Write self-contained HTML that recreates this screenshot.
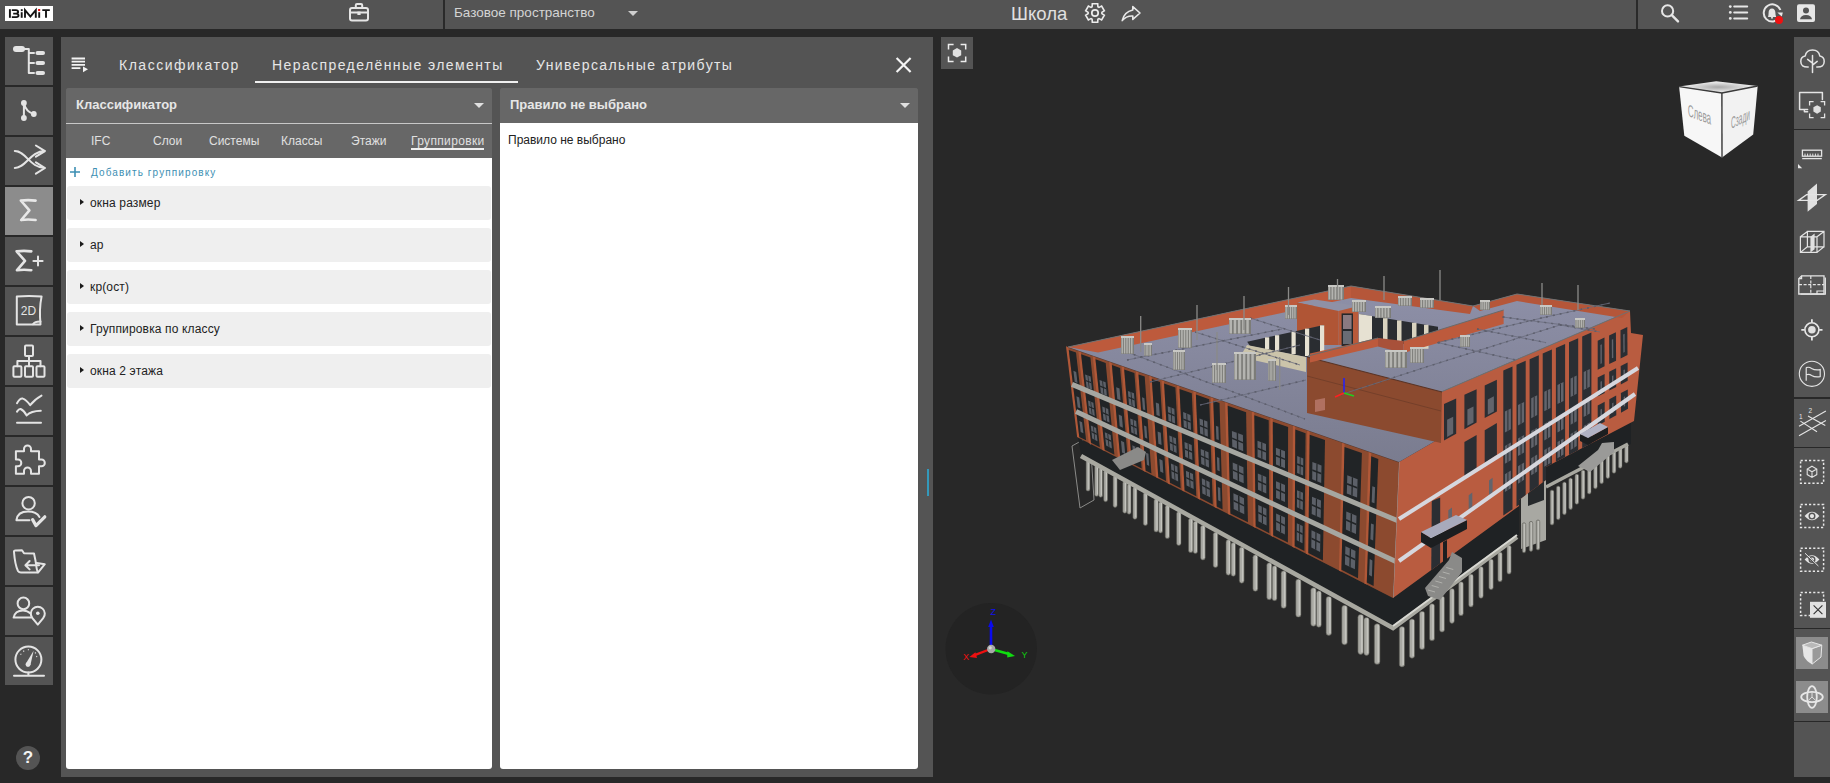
<!DOCTYPE html>
<html><head><meta charset="utf-8">
<style>
*{margin:0;padding:0;box-sizing:border-box}
html,body{width:1830px;height:783px;overflow:hidden;background:#282828;font-family:"Liberation Sans",sans-serif}
.abs{position:absolute}
#top{position:absolute;left:0;top:0;width:1830px;height:29px;background:#545454}
.sep{position:absolute;top:0;width:2px;height:29px;background:#2a2a2a}
.lb{position:absolute;left:5px;width:48px;height:48px;background:#545454}
.lb svg{position:absolute;left:0;top:0}
#panel{position:absolute;left:61px;top:37px;width:872px;height:740px;background:#545454}
.tab{position:absolute;top:20px;font-size:14px;letter-spacing:1.25px;color:#e6e6e6;white-space:nowrap}
.card{position:absolute;background:#fff;border-radius:3px;overflow:hidden}
.chead{position:absolute;left:0;top:0;width:100%;height:35px;background:#676767}
.ctitle{position:absolute;left:10px;top:9px;font-size:13px;font-weight:bold;color:#e6e6e6;white-space:nowrap}
.subtab{position:absolute;top:10px;font-size:12px;color:#e0e0e0;white-space:nowrap}
.item{position:absolute;left:1px;width:424px;height:34px;background:#efefef;border-radius:3px}
.item .tri{position:absolute;left:13px;top:12.8px;width:0;height:0;border-top:3.3px solid transparent;border-bottom:3.3px solid transparent;border-left:4.6px solid #1a1a1a}
.item .txt{position:absolute;left:23px;top:10px;font-size:12px;letter-spacing:0.15px;color:#222;white-space:nowrap}
#rbar{position:absolute;left:1794px;top:37px;width:36px;height:740px;background:#545454}
.rsep{position:absolute;left:0;width:36px;height:1.5px;background:#282828}
</style></head><body>

<!-- TOP BAR -->
<div id="top">
  <div class="abs" style="left:5px;top:6px;width:48px;height:15px;background:#fff"></div>
  <svg class="abs" style="left:0;top:0" width="60" height="29" viewBox="0 0 60 29"><g fill="none" stroke="#151515" stroke-width="1.9">
<path d="M9.9,9.2 V17.8"/><path d="M11.8,10.1 H15.9 Q18.1,10.1 18.1,11.9 Q18.1,13.6 15.9,13.6 H13.2 M15.9,13.6 Q18.5,13.6 18.5,15.6 Q18.5,17.1 16.2,17.1 H11.8"/>
<path d="M21.7,12.2 V17.8"/><path d="M25,17.8 V10.2 L30.4,16.6 L35.8,10.2 V17.8"/><path d="M39.2,12.2 V17.8"/><path d="M42.3,10.1 H49.8 M46,10.1 V17.8"/></g>
<rect x="20.8" y="9.2" width="1.9" height="1.9" fill="#151515"/><rect x="38.1" y="9" width="2.1" height="2.1" fill="#e81010"/></svg>
  <div class="sep" style="left:443px"></div>
  <div class="abs" style="left:454px;top:5px;font-size:13.5px;color:#d4d4d4;white-space:nowrap">Базовое пространство</div>
  <div class="abs" style="left:628px;top:11px;width:0;height:0;border-left:5px solid transparent;border-right:5px solid transparent;border-top:5px solid #cfcfcf"></div>
  <div class="abs" style="left:1011px;top:3px;font-size:18.5px;color:#e0e0e0;white-space:nowrap">Школа</div>
  <div class="sep" style="left:1636px"></div>
<svg class="abs" style="left:0;top:0" width="1830" height="29" viewBox="0 0 1830 29">
<rect x="350" y="8" width="18" height="12.6" rx="2" fill="none" stroke="#e6e6e6" stroke-width="2" stroke-linecap="round" stroke-linejoin="round"/>
<path d="M355.8,8 V5.2 Q355.8,4 357,4 H361 Q362.2,4 362.2,5.2 V8" fill="none" stroke="#e6e6e6" stroke-width="2" stroke-linecap="round" stroke-linejoin="round"/>
<path d="M350,12.6 H368" fill="none" stroke="#e6e6e6" stroke-width="2" stroke-linecap="round" stroke-linejoin="round"/>
<rect x="357.4" y="11.6" width="3.2" height="3.4" fill="#e6e6e6"/>
<path d="M1092.10,6.74 L1092.30,3.79 L1097.70,3.79 L1097.90,6.74 A6.9,6.9 0 0 1 1098.97,7.36 L1101.63,6.06 L1104.33,10.73 L1101.87,12.38 A6.9,6.9 0 0 1 1101.87,13.62 L1104.33,15.27 L1101.63,19.94 L1098.97,18.64 A6.9,6.9 0 0 1 1097.90,19.26 L1097.70,22.21 L1092.30,22.21 L1092.10,19.26 A6.9,6.9 0 0 1 1091.03,18.64 L1088.37,19.94 L1085.67,15.27 L1088.13,13.62 A6.9,6.9 0 0 1 1088.13,12.38 L1085.67,10.73 L1088.37,6.06 L1091.03,7.36 A6.9,6.9 0 0 1 1092.10,6.74 Z" fill="none" stroke="#ececec" stroke-width="1.6" stroke-linejoin="miter"/>
<circle cx="1095" cy="13" r="3.2" fill="none" stroke="#ececec" stroke-width="1.7"/>
<path d="M1132.8,6.6 L1140,13 L1132.8,19.4 V16 Q1126.4,15.6 1122.2,20.6 Q1124.2,11.8 1132.8,10 Z" fill="#545454" stroke="#e8e8e8" stroke-width="1.6" stroke-linejoin="round"/>
<circle cx="1667.6" cy="10.9" r="5.6" fill="none" stroke="#e6e6e6" stroke-width="2"/>
<path d="M1671.8,15.2 L1678,21.4" stroke="#e6e6e6" stroke-width="2.4" stroke-linecap="round"/>
<circle cx="1730.3" cy="6.6" r="1.4" fill="#e6e6e6"/><circle cx="1730.3" cy="12.4" r="1.4" fill="#e6e6e6"/><circle cx="1730.3" cy="18.4" r="1.4" fill="#e6e6e6"/>
<path d="M1734.2,6.6 H1747.2 M1734.2,12.4 H1747.2 M1734.2,18.4 H1747.2" stroke="#e6e6e6" stroke-width="2" stroke-linecap="round"/>
<path d="M1779.6,17.6 A8.6,8.6 0 1 1 1780.4,10" fill="none" stroke="#e6e6e6" stroke-width="2"/>
<path d="M1777.4,12.6 L1781.8,16.6 L1782.8,12.4 Z" fill="#e6e6e6"/>
<path d="M1768,17 Q1768.6,15.6 1768.6,12.8 Q1768.6,8.6 1772,8.4 Q1775.2,8.6 1775.4,12.8 Q1775.4,15.6 1776.2,17 Z" fill="#e6e6e6"/>
<circle cx="1772" cy="17.8" r="1" fill="#e6e6e6"/>
<circle cx="1779" cy="19.9" r="4" fill="#ee1111"/>
<rect x="1797" y="4.2" width="18" height="17.8" rx="2" fill="#e6e6e6"/>
<circle cx="1806" cy="10.4" r="3" fill="#545454"/>
<path d="M1800,19.2 Q1800.6,15.2 1806,15 Q1811.4,15.2 1812,19.2 Z" fill="#545454"/>
</svg>
</div>

<!-- LEFT SIDEBAR -->
<div class="lb" style="top:37px"><svg width="48" height="48" viewBox="0 0 48 48"><rect x="8" y="9" width="12" height="6" rx="3" fill="#e4e4e4"/><path d="M19,12 H23.8 V36 M23.8,16 H29 M23.8,26 H29 M23.8,36 H29" fill="none" stroke="#e4e4e4" stroke-width="2" stroke-linecap="round" stroke-linejoin="round"/><rect x="30.5" y="14" width="9.5" height="4" rx="2" fill="#e4e4e4"/><rect x="30.5" y="24" width="9.5" height="4" rx="2" fill="#e4e4e4"/><rect x="30.5" y="34" width="9.5" height="4" rx="2" fill="#e4e4e4"/></svg></div>
<div class="lb" style="top:87px"><svg width="48" height="48" viewBox="0 0 48 48"><path d="M18.9,16 V31 M18.9,16 Q21,25 28.8,27" fill="none" stroke="#e4e4e4" stroke-width="2" stroke-linecap="round" stroke-linejoin="round"/><circle cx="18.9" cy="16" r="2.9" fill="#e4e4e4"/><circle cx="28.8" cy="27" r="2.9" fill="#e4e4e4"/><circle cx="18.9" cy="31" r="2.9" fill="#e4e4e4"/></svg></div>
<div class="lb" style="top:137px"><svg width="48" height="48" viewBox="0 0 48 48"><path d="M9.8,14.1 C21,14.1 25,31 40,31 M9.8,31 C21,31 25,14.1 40,14.1 M30.9,8.5 L40,14.1 L30.9,19.7 M30.9,25.3 L40,31 L30.9,36.7" fill="none" stroke="#e4e4e4" stroke-width="2" stroke-linecap="round" stroke-linejoin="round"/></svg></div>
<div class="lb" style="top:187px;background:#8c8c8c"><svg width="48" height="48" viewBox="0 0 48 48"><path d="M15.8,13.6 Q23,12.6 30.6,13.6 M16.2,14 L24.4,23.3 L16.2,33 M16.2,33 Q23,32 30.6,33" fill="none" stroke="#e8e8e8" stroke-width="2.6" stroke-linecap="round" stroke-linejoin="round"/></svg></div>
<div class="lb" style="top:237px"><svg width="48" height="48" viewBox="0 0 48 48"><path d="M11.6,14.4 Q19,13.4 26.3,14.4 M12,14.8 L20,23.8 L12,33.2 M12,33.2 Q19,32.4 26.3,33.2" fill="none" stroke="#e4e4e4" stroke-width="2.6" stroke-linecap="round" stroke-linejoin="round"/><path d="M28.4,24 H37.6 M33,19.4 V28.6" fill="none" stroke="#e4e4e4" stroke-width="2" stroke-linecap="round" stroke-linejoin="round"/></svg></div>
<div class="lb" style="top:287px"><svg width="48" height="48" viewBox="0 0 48 48"><path d="M11.8,9.4 Q24,8.6 36.6,9.4 Q34,22 35.5,37.4 L11.8,37.4 Z" fill="none" stroke="#e4e4e4" stroke-width="2" stroke-linecap="round" stroke-linejoin="round"/><path d="M28,37.3 Q30,34.4 35.5,34.6" fill="none" stroke="#e4e4e4" stroke-width="2" stroke-linecap="round" stroke-linejoin="round"/><text x="23.5" y="28.4" font-family="Liberation Sans" font-size="12" fill="#e4e4e4" text-anchor="middle">2D</text></svg></div>
<div class="lb" style="top:337px"><svg width="48" height="48" viewBox="0 0 48 48"><rect x="20" y="8.5" width="8" height="10.5" rx="1" fill="none" stroke="#e4e4e4" stroke-width="2" stroke-linecap="round" stroke-linejoin="round" stroke-width="1.8"/><rect x="8.4" y="29.2" width="8" height="10.5" rx="1" fill="none" stroke="#e4e4e4" stroke-width="2" stroke-linecap="round" stroke-linejoin="round" stroke-width="1.8"/><rect x="20" y="29.2" width="8" height="10.5" rx="1" fill="none" stroke="#e4e4e4" stroke-width="2" stroke-linecap="round" stroke-linejoin="round" stroke-width="1.8"/><rect x="31.5" y="29.2" width="8" height="10.5" rx="1" fill="none" stroke="#e4e4e4" stroke-width="2" stroke-linecap="round" stroke-linejoin="round" stroke-width="1.8"/><path d="M24,19 V29.2 M12.4,29.2 V24 H35.5 V29.2" fill="none" stroke="#e4e4e4" stroke-width="2" stroke-linecap="round" stroke-linejoin="round" stroke-width="1.6"/></svg></div>
<div class="lb" style="top:387px"><svg width="48" height="48" viewBox="0 0 48 48"><path d="M12,16.2 Q15,11 17.8,11.6 Q21,12.5 25.2,18.2 Q30,12 36.5,8.6" fill="none" stroke="#e4e4e4" stroke-width="2" stroke-linecap="round" stroke-linejoin="round" stroke-width="2.2"/><path d="M12,24.6 Q14,21.6 15.6,22 Q19,23.5 21.7,28.4 Q26,24 35.8,23.8" fill="none" stroke="#e4e4e4" stroke-width="2" stroke-linecap="round" stroke-linejoin="round" stroke-width="2.2"/><path d="M12,35.8 H36" fill="none" stroke="#e4e4e4" stroke-width="2" stroke-linecap="round" stroke-linejoin="round" stroke-width="2.2"/></svg></div>
<div class="lb" style="top:437px"><svg width="48" height="48" viewBox="0 0 48 48"><path d="M10.9,14.2 H19 V12 A3.5,3.5 0 0 1 26,12 V14.2 H34 V22.6 H36.5 A3.3,3.3 0 0 1 36.5,29.2 H34 V36.7 H26 V34 A3.5,3.5 0 0 0 19,34 V36.7 H10.9 V29.2 H13 A3.3,3.3 0 0 0 13,22.6 H10.9 Z" fill="none" stroke="#e4e4e4" stroke-width="2" stroke-linecap="round" stroke-linejoin="round" stroke-width="2"/></svg></div>
<div class="lb" style="top:487px"><svg width="48" height="48" viewBox="0 0 48 48"><circle cx="23.6" cy="16.2" r="6.2" fill="none" stroke="#e4e4e4" stroke-width="2" stroke-linecap="round" stroke-linejoin="round"/><path d="M11.4,33.2 Q12.5,24.6 23,24.6 Q31.5,24.6 34.5,30 M11.4,33.2 H24.5" fill="none" stroke="#e4e4e4" stroke-width="2" stroke-linecap="round" stroke-linejoin="round"/><path d="M27.6,32.6 L31,38.6 L39.8,29.8" fill="none" stroke="#e4e4e4" stroke-width="3.2" stroke-linecap="round" stroke-linejoin="round"/></svg></div>
<div class="lb" style="top:537px"><svg width="48" height="48" viewBox="0 0 48 48"><path d="M9,15 Q8.6,13.6 10.5,13.4 L17,13.2 L19,16.2 L29,16.4 Q30.6,23 31.6,31 M9,15 Q10,28 13,34 Q14,35.6 16,35.6 L33,35.6 L39.8,27.2 L31.8,26 M33,35.6 Q31.8,33 31.6,31" fill="none" stroke="#e4e4e4" stroke-width="2" stroke-linecap="round" stroke-linejoin="round" stroke-width="1.8"/><path d="M34,28.2 H20.6 M24.6,24 L20.4,28.2 L24.6,32.4" fill="none" stroke="#e4e4e4" stroke-width="2" stroke-linecap="round" stroke-linejoin="round" stroke-width="1.8"/></svg></div>
<div class="lb" style="top:587px"><svg width="48" height="48" viewBox="0 0 48 48"><circle cx="18.4" cy="16.4" r="5.8" fill="none" stroke="#e4e4e4" stroke-width="2" stroke-linecap="round" stroke-linejoin="round"/><path d="M8.6,30.6 Q10,23.4 18,23.4 Q22.6,23.4 25.6,26.6 M8.6,30.6 H26" fill="none" stroke="#e4e4e4" stroke-width="2" stroke-linecap="round" stroke-linejoin="round"/><path d="M32.8,37.6 L27.4,31.2 A7,7 0 1 1 38.2,31.2 Z" fill="none" stroke="#e4e4e4" stroke-width="2" stroke-linecap="round" stroke-linejoin="round" stroke-width="1.8"/><circle cx="32.8" cy="26.2" r="1.8" fill="#e4e4e4"/></svg></div>
<div class="lb" style="top:637px"><svg width="48" height="48" viewBox="0 0 48 48"><circle cx="23.4" cy="22.6" r="13" fill="none" stroke="#e4e4e4" stroke-width="2" stroke-linecap="round" stroke-linejoin="round" stroke-width="2.2"/><path d="M23.4,35.6 V38.6 M9,38.7 H39" fill="none" stroke="#e4e4e4" stroke-width="2" stroke-linecap="round" stroke-linejoin="round" stroke-width="2.2"/><path d="M20.6,27 L28.6,13.8 L25.4,28.2 Z" fill="#e4e4e4"/><circle cx="23" cy="27.6" r="2.4" fill="#e4e4e4"/><path d="M15.5,17 L16.3,17.6 M18.4,13.7 L19,14.6 M23.4,12.2 V13.3 M30.8,15.5 L30,16.3 M32.2,19.4 L31.2,19.8" stroke="#e4e4e4" stroke-width="1.2"/></svg></div>
<div class="abs" style="left:16px;top:746px;width:24px;height:24px;border-radius:50%;background:#545454;color:#f4f4f4;font-weight:bold;font-size:17px;text-align:center;line-height:23px">?</div>

<!-- PANEL -->
<div id="panel">
<svg class="abs" style="left:0;top:0" width="872" height="60" viewBox="61 37 872 60">
<path d="M71.6,58.5 H85 M71.6,61.7 H85 M71.6,64.9 H85 M71.6,68.1 H80.4" stroke="#f2f2f2" stroke-width="1.8"/>
<path d="M83,66.4 L88,69.3 L83,72.2 Z" fill="#f2f2f2"/>
<path d="M896.6,58 L910.6,72 M910.6,58 L896.6,72" stroke="#f4f4f4" stroke-width="2.2"/>
</svg>
  <div class="tab" style="left:58px;letter-spacing:1.52px">Классификатор</div>
  <div class="tab" style="left:211px;letter-spacing:1.41px">Нераспределённые элементы</div>
  <div class="abs" style="left:194px;top:44px;width:263px;height:2px;background:#f0f0f0"></div>
  <div class="tab" style="left:475px;letter-spacing:1.37px">Универсальные атрибуты</div>

  <div class="card" style="left:5px;top:51px;width:426px;height:681px;background:linear-gradient(#676767 0,#676767 70px,#fff 70px)">
    <div class="chead"></div>
    <div class="ctitle">Классификатор</div>
    <div class="abs" style="left:408px;top:15px;width:0;height:0;border-left:5px solid transparent;border-right:5px solid transparent;border-top:5px solid #e0e0e0"></div>
    <div class="abs" style="left:0;top:35px;width:100%;height:1px;background:#c8c8c8"></div>
    <div class="abs" style="left:0;top:36px;width:100%;height:34px;background:#676767">
      <div class="subtab" style="left:25px">IFC</div>
      <div class="subtab" style="left:87px">Слои</div>
      <div class="subtab" style="left:143px">Системы</div>
      <div class="subtab" style="left:215px">Классы</div>
      <div class="subtab" style="left:285px">Этажи</div>
      <div class="subtab" style="left:345px;letter-spacing:0.35px">Группировки</div>
      <div class="abs" style="left:345px;top:24px;width:73px;height:2px;background:#f0f0f0"></div>
    </div>
    <svg class="abs" style="left:2px;top:78px" width="14" height="14" viewBox="0 0 14 14"><path d="M2,6 H12 M7,1 V11" stroke="#3d8fb3" stroke-width="1.6"/></svg>
    <div class="abs" style="left:25px;top:79px;font-size:10px;letter-spacing:1.1px;color:#3d8fb3;white-space:nowrap">Добавить группировку</div>
    <div class="item" style="top:98px"><div class="tri"></div><div class="txt">окна размер</div></div>
    <div class="item" style="top:140px"><div class="tri"></div><div class="txt">ар</div></div>
    <div class="item" style="top:182px"><div class="tri"></div><div class="txt">кр(ост)</div></div>
    <div class="item" style="top:224px"><div class="tri"></div><div class="txt">Группировка по классу</div></div>
    <div class="item" style="top:266px"><div class="tri"></div><div class="txt">окна 2 этажа</div></div>
  </div>

  <div class="card" style="left:439px;top:51px;width:418px;height:681px;background:linear-gradient(#676767 0,#676767 35px,#fff 35px)">
    <div class="chead"></div>
    <div class="ctitle">Правило не выбрано</div>
    <div class="abs" style="left:400px;top:15px;width:0;height:0;border-left:5px solid transparent;border-right:5px solid transparent;border-top:5px solid #e0e0e0"></div>
    <div class="abs" style="left:8px;top:45px;font-size:12px;color:#222;white-space:nowrap">Правило не выбрано</div>
  </div>
  <div class="abs" style="left:866px;top:432px;width:2px;height:27px;background:#3399bb"></div>
</div>

<!-- VIEWPORT focus btn -->
<div class="abs" style="left:941px;top:37px;width:32px;height:32px;background:#545454"></div>
<svg class="abs" style="left:941px;top:37px" width="32" height="32" viewBox="941 37 32 32">
<path d="M948.5,49.5 V44.4 H953.6 M960.6,44.4 H965.7 V49.5 M965.7,56.4 V61.6 H960.6 M953.6,61.6 H948.5 V56.4" fill="none" stroke="#ececec" stroke-width="1.5"/>
<path d="M957,48 L961.2,50.4 V55.2 L957,57.6 L952.8,55.2 V50.4 Z" fill="#e2e2e2"/>
</svg>

<!-- RIGHT BAR -->
<div id="rbar">
  <div class="rsep" style="top:91.6px"></div>
  <div class="rsep" style="top:360px"></div>
  <div class="rsep" style="top:409.8px"></div>
  <div class="rsep" style="top:590.8px"></div>
  <div class="rsep" style="top:683.8px"></div>
  <div class="abs" style="left:2px;top:600px;width:32px;height:32px;background:#8c8c8c"></div>
  <div class="abs" style="left:2px;top:644px;width:32px;height:32px;background:#8c8c8c"></div>
</div>

<svg class="abs" style="left:0;top:0" width="1830" height="783" viewBox="0 0 1830 783"><rect x="1086.1" y="460.1" width="3.8" height="31.0" rx="1.9" fill="#a9a9a3" stroke="#55554f" stroke-width="0.6"/><rect x="1088.2" y="461.1" width="1.1" height="28.0" fill="#c4c4be"/><rect x="1094.7" y="465.0" width="3.9" height="31.3" rx="1.9" fill="#a9a9a3" stroke="#55554f" stroke-width="0.6"/><rect x="1096.9" y="466.0" width="1.2" height="28.3" fill="#c4c4be"/><rect x="1098.9" y="468.0" width="3.7" height="29.3" rx="1.8" fill="#a9a9a3" stroke="#55554f" stroke-width="0.6"/><rect x="1100.9" y="469.0" width="1.1" height="26.3" fill="#c4c4be"/><rect x="1103.7" y="470.2" width="3.9" height="31.6" rx="2.0" fill="#a9a9a3" stroke="#55554f" stroke-width="0.6"/><rect x="1105.9" y="471.2" width="1.2" height="28.6" fill="#c4c4be"/><rect x="1113.1" y="475.5" width="4.0" height="31.9" rx="2.0" fill="#a9a9a3" stroke="#55554f" stroke-width="0.6"/><rect x="1115.3" y="476.5" width="1.2" height="28.9" fill="#c4c4be"/><rect x="1122.8" y="481.0" width="4.0" height="32.2" rx="2.0" fill="#a9a9a3" stroke="#55554f" stroke-width="0.6"/><rect x="1125.0" y="482.0" width="1.2" height="29.2" fill="#c4c4be"/><rect x="1127.2" y="484.0" width="3.8" height="30.2" rx="1.9" fill="#a9a9a3" stroke="#55554f" stroke-width="0.6"/><rect x="1129.3" y="485.0" width="1.1" height="27.2" fill="#c4c4be"/><rect x="1132.9" y="486.7" width="4.1" height="32.6" rx="2.1" fill="#a9a9a3" stroke="#55554f" stroke-width="0.6"/><rect x="1135.1" y="487.7" width="1.2" height="29.6" fill="#c4c4be"/><rect x="1143.3" y="492.6" width="4.2" height="32.9" rx="2.1" fill="#a9a9a3" stroke="#55554f" stroke-width="0.6"/><rect x="1145.6" y="493.6" width="1.3" height="29.9" fill="#c4c4be"/><rect x="1154.0" y="498.7" width="4.3" height="33.3" rx="2.1" fill="#a9a9a3" stroke="#55554f" stroke-width="0.6"/><rect x="1156.4" y="499.7" width="1.3" height="30.3" fill="#c4c4be"/><rect x="1158.6" y="501.7" width="4.0" height="31.3" rx="2.0" fill="#a9a9a3" stroke="#55554f" stroke-width="0.6"/><rect x="1160.8" y="502.7" width="1.2" height="28.3" fill="#c4c4be"/><rect x="1165.2" y="505.0" width="4.3" height="33.6" rx="2.2" fill="#a9a9a3" stroke="#55554f" stroke-width="0.6"/><rect x="1167.5" y="506.0" width="1.3" height="30.6" fill="#c4c4be"/><rect x="1176.6" y="511.5" width="4.4" height="34.0" rx="2.2" fill="#a9a9a3" stroke="#55554f" stroke-width="0.6"/><rect x="1179.1" y="512.5" width="1.3" height="31.0" fill="#c4c4be"/><rect x="1188.5" y="518.2" width="4.5" height="34.4" rx="2.2" fill="#a9a9a3" stroke="#55554f" stroke-width="0.6"/><rect x="1190.9" y="519.2" width="1.3" height="31.4" fill="#c4c4be"/><rect x="1193.3" y="521.2" width="4.2" height="32.4" rx="2.1" fill="#a9a9a3" stroke="#55554f" stroke-width="0.6"/><rect x="1195.6" y="522.2" width="1.3" height="29.4" fill="#c4c4be"/><rect x="1200.6" y="525.2" width="4.6" height="34.8" rx="2.3" fill="#a9a9a3" stroke="#55554f" stroke-width="0.6"/><rect x="1203.1" y="526.2" width="1.4" height="31.8" fill="#c4c4be"/><rect x="1213.2" y="532.3" width="4.6" height="35.2" rx="2.3" fill="#a9a9a3" stroke="#55554f" stroke-width="0.6"/><rect x="1215.7" y="533.3" width="1.4" height="32.2" fill="#c4c4be"/><rect x="1226.0" y="539.6" width="4.7" height="35.6" rx="2.4" fill="#a9a9a3" stroke="#55554f" stroke-width="0.6"/><rect x="1228.6" y="540.6" width="1.4" height="32.6" fill="#c4c4be"/><rect x="1231.1" y="542.6" width="4.4" height="33.6" rx="2.2" fill="#a9a9a3" stroke="#55554f" stroke-width="0.6"/><rect x="1233.6" y="543.6" width="1.3" height="30.6" fill="#c4c4be"/><rect x="1239.3" y="547.1" width="4.8" height="36.1" rx="2.4" fill="#a9a9a3" stroke="#55554f" stroke-width="0.6"/><rect x="1241.9" y="548.1" width="1.4" height="33.1" fill="#c4c4be"/><rect x="1252.9" y="554.8" width="4.9" height="36.5" rx="2.5" fill="#a9a9a3" stroke="#55554f" stroke-width="0.6"/><rect x="1255.6" y="555.8" width="1.5" height="33.5" fill="#c4c4be"/><rect x="1266.8" y="562.7" width="5.0" height="37.0" rx="2.5" fill="#a9a9a3" stroke="#55554f" stroke-width="0.6"/><rect x="1269.6" y="563.7" width="1.5" height="34.0" fill="#c4c4be"/><rect x="1272.2" y="565.7" width="4.7" height="35.0" rx="2.3" fill="#a9a9a3" stroke="#55554f" stroke-width="0.6"/><rect x="1274.7" y="566.7" width="1.4" height="32.0" fill="#c4c4be"/><rect x="1281.1" y="570.8" width="5.1" height="37.5" rx="2.5" fill="#a9a9a3" stroke="#55554f" stroke-width="0.6"/><rect x="1283.9" y="571.8" width="1.5" height="34.5" fill="#c4c4be"/><rect x="1295.8" y="579.1" width="5.2" height="38.0" rx="2.6" fill="#a9a9a3" stroke="#55554f" stroke-width="0.6"/><rect x="1298.6" y="580.1" width="1.6" height="35.0" fill="#c4c4be"/><rect x="1310.8" y="587.7" width="5.3" height="38.5" rx="2.6" fill="#a9a9a3" stroke="#55554f" stroke-width="0.6"/><rect x="1313.7" y="588.7" width="1.6" height="35.5" fill="#c4c4be"/><rect x="1316.4" y="590.7" width="4.9" height="36.5" rx="2.5" fill="#a9a9a3" stroke="#55554f" stroke-width="0.6"/><rect x="1319.1" y="591.7" width="1.5" height="33.5" fill="#c4c4be"/><rect x="1326.1" y="596.4" width="5.4" height="39.0" rx="2.7" fill="#a9a9a3" stroke="#55554f" stroke-width="0.6"/><rect x="1329.1" y="597.4" width="1.6" height="36.0" fill="#c4c4be"/><rect x="1341.8" y="605.3" width="5.5" height="39.5" rx="2.7" fill="#a9a9a3" stroke="#55554f" stroke-width="0.6"/><rect x="1344.8" y="606.3" width="1.6" height="36.5" fill="#c4c4be"/><rect x="1357.9" y="614.4" width="5.6" height="40.0" rx="2.8" fill="#a9a9a3" stroke="#55554f" stroke-width="0.6"/><rect x="1360.9" y="615.4" width="1.7" height="37.0" fill="#c4c4be"/><rect x="1363.9" y="617.4" width="5.2" height="38.0" rx="2.6" fill="#a9a9a3" stroke="#55554f" stroke-width="0.6"/><rect x="1366.7" y="618.4" width="1.6" height="35.0" fill="#c4c4be"/><rect x="1374.3" y="623.7" width="5.7" height="40.6" rx="2.9" fill="#a9a9a3" stroke="#55554f" stroke-width="0.6"/><rect x="1377.4" y="624.7" width="1.7" height="37.6" fill="#c4c4be"/><rect x="1399.3" y="626.5" width="5.3" height="40.4" rx="2.7" fill="#a9a9a3" stroke="#55554f" stroke-width="0.6"/><rect x="1402.3" y="627.5" width="1.6" height="37.4" fill="#c4c4be"/><rect x="1409.4" y="618.9" width="5.2" height="39.3" rx="2.6" fill="#a9a9a3" stroke="#55554f" stroke-width="0.6"/><rect x="1412.3" y="619.9" width="1.6" height="36.3" fill="#c4c4be"/><rect x="1419.5" y="611.3" width="5.1" height="38.2" rx="2.5" fill="#a9a9a3" stroke="#55554f" stroke-width="0.6"/><rect x="1422.3" y="612.3" width="1.5" height="35.2" fill="#c4c4be"/><rect x="1429.5" y="603.7" width="5.0" height="37.1" rx="2.5" fill="#a9a9a3" stroke="#55554f" stroke-width="0.6"/><rect x="1432.2" y="604.7" width="1.5" height="34.1" fill="#c4c4be"/><rect x="1439.6" y="596.1" width="4.9" height="36.0" rx="2.4" fill="#a9a9a3" stroke="#55554f" stroke-width="0.6"/><rect x="1442.2" y="597.1" width="1.5" height="33.0" fill="#c4c4be"/><rect x="1449.6" y="588.5" width="4.7" height="34.9" rx="2.4" fill="#a9a9a3" stroke="#55554f" stroke-width="0.6"/><rect x="1452.2" y="589.5" width="1.4" height="31.9" fill="#c4c4be"/><rect x="1458.7" y="581.7" width="4.6" height="34.0" rx="2.3" fill="#a9a9a3" stroke="#55554f" stroke-width="0.6"/><rect x="1461.2" y="582.7" width="1.4" height="31.0" fill="#c4c4be"/><rect x="1468.7" y="574.1" width="4.5" height="32.9" rx="2.3" fill="#a9a9a3" stroke="#55554f" stroke-width="0.6"/><rect x="1471.2" y="575.1" width="1.4" height="29.9" fill="#c4c4be"/><rect x="1478.8" y="566.5" width="4.4" height="31.8" rx="2.2" fill="#a9a9a3" stroke="#55554f" stroke-width="0.6"/><rect x="1481.2" y="567.5" width="1.3" height="28.8" fill="#c4c4be"/><rect x="1488.9" y="559.0" width="4.3" height="30.7" rx="2.1" fill="#a9a9a3" stroke="#55554f" stroke-width="0.6"/><rect x="1491.2" y="560.0" width="1.3" height="27.7" fill="#c4c4be"/><rect x="1497.9" y="552.1" width="4.2" height="29.7" rx="2.1" fill="#a9a9a3" stroke="#55554f" stroke-width="0.6"/><rect x="1500.2" y="553.1" width="1.3" height="26.7" fill="#c4c4be"/><rect x="1507.0" y="545.3" width="4.1" height="28.8" rx="2.0" fill="#a9a9a3" stroke="#55554f" stroke-width="0.6"/><rect x="1509.2" y="546.3" width="1.2" height="25.8" fill="#c4c4be"/><rect x="1550.2" y="490.0" width="3.6" height="35.0" rx="1.8" fill="#a9a9a3" stroke="#55554f" stroke-width="0.6"/><rect x="1552.2" y="491.0" width="1.1" height="32.0" fill="#c4c4be"/><rect x="1556.4" y="486.0" width="3.6" height="33.8" rx="1.8" fill="#a9a9a3" stroke="#55554f" stroke-width="0.6"/><rect x="1558.4" y="487.0" width="1.1" height="30.8" fill="#c4c4be"/><rect x="1562.6" y="482.0" width="3.6" height="32.7" rx="1.8" fill="#a9a9a3" stroke="#55554f" stroke-width="0.6"/><rect x="1564.6" y="483.0" width="1.1" height="29.7" fill="#c4c4be"/><rect x="1568.8" y="478.0" width="3.6" height="31.5" rx="1.8" fill="#a9a9a3" stroke="#55554f" stroke-width="0.6"/><rect x="1570.8" y="479.0" width="1.1" height="28.5" fill="#c4c4be"/><rect x="1575.0" y="474.0" width="3.6" height="30.3" rx="1.8" fill="#a9a9a3" stroke="#55554f" stroke-width="0.6"/><rect x="1577.0" y="475.0" width="1.1" height="27.3" fill="#c4c4be"/><rect x="1581.2" y="470.0" width="3.6" height="29.2" rx="1.8" fill="#a9a9a3" stroke="#55554f" stroke-width="0.6"/><rect x="1583.2" y="471.0" width="1.1" height="26.2" fill="#c4c4be"/><rect x="1587.4" y="466.0" width="3.6" height="28.0" rx="1.8" fill="#a9a9a3" stroke="#55554f" stroke-width="0.6"/><rect x="1589.4" y="467.0" width="1.1" height="25.0" fill="#c4c4be"/><rect x="1593.6" y="462.0" width="3.6" height="26.8" rx="1.8" fill="#a9a9a3" stroke="#55554f" stroke-width="0.6"/><rect x="1595.6" y="463.0" width="1.1" height="23.8" fill="#c4c4be"/><rect x="1599.8" y="458.0" width="3.6" height="25.7" rx="1.8" fill="#a9a9a3" stroke="#55554f" stroke-width="0.6"/><rect x="1601.8" y="459.0" width="1.1" height="22.7" fill="#c4c4be"/><rect x="1606.0" y="454.0" width="3.6" height="24.5" rx="1.8" fill="#a9a9a3" stroke="#55554f" stroke-width="0.6"/><rect x="1608.0" y="455.0" width="1.1" height="21.5" fill="#c4c4be"/><rect x="1612.2" y="450.0" width="3.6" height="23.3" rx="1.8" fill="#a9a9a3" stroke="#55554f" stroke-width="0.6"/><rect x="1614.2" y="451.0" width="1.1" height="20.3" fill="#c4c4be"/><rect x="1618.4" y="446.0" width="3.6" height="22.2" rx="1.8" fill="#a9a9a3" stroke="#55554f" stroke-width="0.6"/><rect x="1620.4" y="447.0" width="1.1" height="19.2" fill="#c4c4be"/><rect x="1624.6" y="442.0" width="3.6" height="21.0" rx="1.8" fill="#a9a9a3" stroke="#55554f" stroke-width="0.6"/><rect x="1626.6" y="443.0" width="1.1" height="18.0" fill="#c4c4be"/><polygon points="1521.0,477.0 1546.0,467.0 1546.0,540.0 1521.0,549.0" fill="#a8a8a2" /><polygon points="1528.0,470.0 1544.0,463.0 1544.0,500.0 1528.0,506.0" fill="#26292b" /><rect x="1522.3" y="522.8" width="3.4" height="30.0" rx="1.7" fill="#a9a9a3" stroke="#55554f" stroke-width="0.6"/><rect x="1524.2" y="523.8" width="1.0" height="27.0" fill="#c4c4be"/><rect x="1529.3" y="521.4" width="3.4" height="30.0" rx="1.7" fill="#a9a9a3" stroke="#55554f" stroke-width="0.6"/><rect x="1531.2" y="522.4" width="1.0" height="27.0" fill="#c4c4be"/><rect x="1536.3" y="520.0" width="3.4" height="30.0" rx="1.7" fill="#a9a9a3" stroke="#55554f" stroke-width="0.6"/><rect x="1538.2" y="521.0" width="1.0" height="27.0" fill="#c4c4be"/><polyline points="1072,446 1090,436 1094,500 1080,508 1072,446" fill="none" stroke="#8a8a88" stroke-width="1"/><polygon points="1078.0,438.0 1393.0,598.0 1519.0,506.0 1519.0,534.0 1393.0,627.0 1081.0,455.0" fill="#1f2224" /><polygon points="1546.0,467.0 1631.0,419.0 1631.0,444.0 1546.0,486.0" fill="#1f2224" /><polyline points="1081.0,456.0 1393.0,628.0 1517.0,537.0" fill="none" stroke="#a8a8a0" stroke-width="4.5"/><polyline points="1393.0,626.0 1517.0,535.0" fill="none" stroke="#d8d8d2" stroke-width="2"/><polyline points="1546.0,487.0 1628.0,444.0" fill="none" stroke="#a8a8a0" stroke-width="3.5"/><polygon points="1068.0,347.0 1399.0,462.0 1393.0,598.0 1079.0,438.0" fill="#8c4a2f" /><polygon points="1066.0,346.3 1068.5,347.2 1079.5,438.2 1077.1,437.0" fill="#b05838" /><polygon points="1068.8,349.9 1076.0,352.4 1086.1,440.3 1079.3,436.9" fill="#212426" /><polygon points="1073.4,370.8 1076.2,371.9 1077.5,382.9 1074.7,381.7" fill="#5c6068" /><polygon points="1076.4,396.3 1079.2,397.6 1080.5,408.6 1077.7,407.3" fill="#5c6068" /><polygon points="1079.4,421.0 1082.1,422.3 1083.4,433.3 1080.7,432.0" fill="#5c6068" /><polygon points="1078.3,350.6 1080.8,351.5 1091.2,444.2 1088.8,443.0" fill="#b05838" /><polygon points="1081.1,354.2 1090.4,357.5 1099.8,447.3 1091.0,442.8" fill="#212426" /><polygon points="1085.1,374.4 1090.6,376.5 1092.0,389.6 1086.6,387.4" fill="#5c6068" /><polygon points="1087.5,375.3 1088.2,375.6 1089.6,388.7 1088.9,388.4" fill="#212426" /><polygon points="1085.7,379.9 1091.2,382.0 1091.3,383.3 1085.9,381.2" fill="#212426" /><polygon points="1088.0,400.5 1093.4,402.8 1094.8,415.9 1089.4,413.5" fill="#5c6068" /><polygon points="1090.3,401.5 1091.1,401.8 1092.5,414.8 1091.8,414.5" fill="#212426" /><polygon points="1088.6,405.9 1094.0,408.3 1094.1,409.6 1088.8,407.2" fill="#212426" /><polygon points="1090.8,425.6 1096.1,428.1 1097.5,441.2 1092.2,438.6" fill="#5c6068" /><polygon points="1093.1,426.7 1093.8,427.0 1095.2,440.1 1094.5,439.7" fill="#212426" /><polygon points="1091.4,431.0 1096.7,433.6 1096.8,434.9 1091.5,432.3" fill="#212426" /><polygon points="1092.7,355.6 1095.2,356.4 1104.8,451.1 1102.4,449.9" fill="#b05838" /><polygon points="1095.5,359.3 1105.7,362.9 1114.4,454.7 1104.7,449.7" fill="#212426" /><polygon points="1099.5,380.0 1105.6,382.3 1106.9,395.7 1100.9,393.3" fill="#5c6068" /><polygon points="1102.2,381.0 1103.0,381.3 1104.3,394.6 1103.5,394.3" fill="#212426" /><polygon points="1100.1,385.5 1106.2,387.9 1106.3,389.3 1100.2,386.9" fill="#212426" /><polygon points="1102.2,406.6 1108.2,409.1 1109.5,422.5 1103.5,419.8" fill="#5c6068" /><polygon points="1104.8,407.7 1105.6,408.0 1106.9,421.4 1106.1,421.0" fill="#212426" /><polygon points="1102.7,412.1 1108.7,414.8 1108.9,416.1 1102.9,413.5" fill="#212426" /><polygon points="1104.8,432.2 1110.7,435.0 1111.9,448.4 1106.1,445.5" fill="#5c6068" /><polygon points="1107.3,433.4 1108.1,433.8 1109.4,447.1 1108.6,446.8" fill="#212426" /><polygon points="1105.3,437.8 1111.2,440.6 1111.3,442.0 1105.4,439.1" fill="#212426" /><polygon points="1109.1,361.3 1111.6,362.2 1120.4,459.1 1118.0,457.9" fill="#b05838" /><polygon points="1111.9,365.1 1120.1,367.9 1128.0,461.6 1120.2,457.6" fill="#212426" /><polygon points="1116.2,387.3 1119.5,388.6 1120.5,400.3 1117.3,399.0" fill="#5c6068" /><polygon points="1118.7,414.6 1121.9,415.9 1122.9,427.7 1119.7,426.2" fill="#5c6068" /><polygon points="1121.0,440.8 1124.1,442.3 1125.2,454.0 1122.0,452.5" fill="#5c6068" /><polygon points="1121.5,365.6 1123.9,366.4 1132.1,465.0 1129.7,463.8" fill="#b05838" /><polygon points="1124.2,369.4 1134.4,373.0 1141.7,468.5 1131.9,463.6" fill="#212426" /><polygon points="1127.9,390.9 1134.0,393.2 1135.1,407.2 1129.0,404.7" fill="#5c6068" /><polygon points="1130.5,391.9 1131.4,392.2 1132.5,406.1 1131.7,405.8" fill="#212426" /><polygon points="1128.4,396.7 1134.4,399.1 1134.6,400.5 1128.5,398.1" fill="#212426" /><polygon points="1130.2,418.6 1136.2,421.1 1137.2,435.1 1131.3,432.4" fill="#5c6068" /><polygon points="1132.8,419.7 1133.6,420.0 1134.7,433.9 1133.9,433.6" fill="#212426" /><polygon points="1130.6,424.4 1136.6,427.0 1136.7,428.4 1130.7,425.8" fill="#212426" /><polygon points="1132.3,445.3 1138.2,448.1 1139.3,462.0 1133.4,459.1" fill="#5c6068" /><polygon points="1134.9,446.5 1135.7,446.9 1136.8,460.8 1136.0,460.4" fill="#212426" /><polygon points="1132.8,451.1 1138.7,453.9 1138.8,455.3 1132.9,452.5" fill="#212426" /><polygon points="1135.8,370.6 1138.3,371.4 1145.7,472.0 1143.3,470.8" fill="#b05838" /><polygon points="1138.5,374.4 1144.7,376.6 1151.4,473.4 1145.6,470.5" fill="#212426" /><polygon points="1142.0,397.3 1144.4,398.2 1145.3,410.3 1142.9,409.4" fill="#5c6068" /><polygon points="1144.0,425.5 1146.4,426.5 1147.3,438.7 1144.9,437.6" fill="#5c6068" /><polygon points="1146.0,452.7 1148.4,453.8 1149.2,466.0 1146.9,464.8" fill="#5c6068" /><polygon points="1149.2,375.2 1151.6,376.1 1158.4,478.4 1156.0,477.2" fill="#b05838" /><polygon points="1151.8,379.1 1160.0,382.0 1166.0,480.9 1158.3,476.9" fill="#212426" /><polygon points="1155.8,402.6 1159.0,403.8 1159.8,416.2 1156.5,414.9" fill="#5c6068" /><polygon points="1157.6,431.4 1160.8,432.7 1161.6,445.1 1158.4,443.7" fill="#5c6068" /><polygon points="1159.4,459.1 1162.5,460.6 1163.3,473.0 1160.2,471.4" fill="#5c6068" /><polygon points="1161.5,379.5 1164.0,380.3 1170.0,484.4 1167.7,483.2" fill="#b05838" /><polygon points="1164.1,383.5 1175.4,387.4 1180.7,488.3 1169.9,482.8" fill="#212426" /><polygon points="1167.7,406.2 1174.3,408.7 1175.1,423.5 1168.5,420.8" fill="#5c6068" /><polygon points="1170.6,407.3 1171.4,407.6 1172.2,422.3 1171.4,422.0" fill="#212426" /><polygon points="1168.0,412.3 1174.7,414.9 1174.8,416.4 1168.1,413.8" fill="#212426" /><polygon points="1169.3,435.4 1175.9,438.2 1176.7,453.0 1170.2,450.0" fill="#5c6068" /><polygon points="1172.2,436.6 1173.1,437.0 1173.9,451.7 1173.0,451.3" fill="#212426" /><polygon points="1169.7,441.5 1176.2,444.4 1176.3,445.9 1169.8,443.0" fill="#212426" /><polygon points="1170.9,463.6 1177.4,466.6 1178.2,481.4 1171.8,478.2" fill="#5c6068" /><polygon points="1173.7,464.9 1174.6,465.3 1175.4,480.0 1174.6,479.6" fill="#212426" /><polygon points="1171.3,469.7 1177.8,472.8 1177.8,474.3 1171.4,471.2" fill="#212426" /><polygon points="1176.9,384.8 1179.4,385.7 1184.6,491.8 1182.3,490.6" fill="#b05838" /><polygon points="1179.5,388.9 1191.8,393.2 1196.3,496.2 1184.6,490.2" fill="#212426" /><polygon points="1183.1,412.1 1190.4,414.9 1191.0,430.0 1183.8,427.0" fill="#5c6068" /><polygon points="1186.2,413.3 1187.2,413.7 1187.9,428.7 1186.9,428.3" fill="#212426" /><polygon points="1183.4,418.4 1190.6,421.2 1190.7,422.7 1183.4,419.9" fill="#212426" /><polygon points="1184.5,441.9 1191.7,445.0 1192.4,460.0 1185.2,456.8" fill="#5c6068" /><polygon points="1187.6,443.3 1188.6,443.7 1189.3,458.6 1188.3,458.2" fill="#212426" /><polygon points="1184.8,448.2 1192.0,451.3 1192.0,452.8 1184.9,449.7" fill="#212426" /><polygon points="1185.9,470.7 1193.0,474.0 1193.7,489.1 1186.6,485.6" fill="#5c6068" /><polygon points="1189.0,472.1 1189.9,472.6 1190.6,487.6 1189.7,487.1" fill="#212426" /><polygon points="1186.2,476.9 1193.3,480.3 1193.3,481.8 1186.3,478.4" fill="#212426" /><polygon points="1193.3,390.5 1195.8,391.4 1200.2,499.8 1197.9,498.6" fill="#b05838" /><polygon points="1195.9,394.6 1209.2,399.3 1212.8,504.6 1200.2,498.1" fill="#212426" /><polygon points="1199.5,418.4 1207.4,421.5 1207.9,436.8 1200.1,433.6" fill="#5c6068" /><polygon points="1202.9,419.7 1204.0,420.1 1204.5,435.5 1203.5,435.0" fill="#212426" /><polygon points="1199.7,424.8 1207.6,427.9 1207.7,429.5 1199.8,426.3" fill="#212426" /><polygon points="1200.7,448.9 1208.5,452.2 1209.0,467.6 1201.3,464.1" fill="#5c6068" /><polygon points="1204.1,450.3 1205.1,450.8 1205.7,466.1 1204.6,465.6" fill="#212426" /><polygon points="1200.9,455.3 1208.7,458.7 1208.8,460.2 1201.0,456.8" fill="#212426" /><polygon points="1201.8,478.2 1209.5,481.9 1210.1,497.2 1202.4,493.4" fill="#5c6068" /><polygon points="1205.2,479.8 1206.2,480.3 1206.8,495.6 1205.8,495.1" fill="#212426" /><polygon points="1202.1,484.6 1209.8,488.3 1209.8,489.9 1202.2,486.1" fill="#212426" /><polygon points="1210.7,396.6 1213.2,397.5 1216.8,508.2 1214.4,507.0" fill="#b05838" /><polygon points="1213.3,400.8 1219.5,402.9 1222.6,509.5 1216.7,506.5" fill="#212426" /><polygon points="1215.9,425.8 1218.4,426.8 1218.8,440.1 1216.4,439.2" fill="#5c6068" /><polygon points="1216.9,456.9 1219.3,458.0 1219.7,471.3 1217.3,470.2" fill="#5c6068" /><polygon points="1217.8,486.9 1220.2,488.0 1220.6,501.4 1218.2,500.2" fill="#5c6068" /><polygon points="1225.1,401.6 1227.6,402.4 1230.4,515.1 1228.0,513.9" fill="#b05838" /><polygon points="1227.7,405.8 1246.1,412.3 1247.9,522.3 1230.4,513.5" fill="#212426" /><polygon points="1231.9,430.9 1242.9,435.1 1243.2,451.2 1232.3,446.7" fill="#5c6068" /><polygon points="1236.7,432.7 1238.1,433.3 1238.4,449.3 1237.0,448.7" fill="#212426" /><polygon points="1232.1,437.6 1243.0,441.9 1243.0,443.5 1232.1,439.1" fill="#212426" /><polygon points="1232.7,462.6 1243.4,467.2 1243.7,483.3 1233.0,478.4" fill="#5c6068" /><polygon points="1237.3,464.6 1238.8,465.2 1239.1,481.2 1237.7,480.5" fill="#212426" /><polygon points="1232.8,469.3 1243.6,474.0 1243.6,475.6 1232.8,470.8" fill="#212426" /><polygon points="1233.4,493.2 1244.0,498.2 1244.3,514.3 1233.7,509.0" fill="#5c6068" /><polygon points="1238.0,495.3 1239.4,496.0 1239.7,512.0 1238.3,511.3" fill="#212426" /><polygon points="1233.5,499.8 1244.1,504.9 1244.1,506.6 1233.5,501.4" fill="#212426" /><polygon points="1251.8,410.9 1254.3,411.7 1255.7,528.0 1253.4,526.8" fill="#b05838" /><polygon points="1254.3,415.2 1268.7,420.3 1269.3,533.2 1255.7,526.3" fill="#212426" /><polygon points="1257.5,440.7 1266.0,444.0 1266.1,460.5 1257.6,457.1" fill="#5c6068" /><polygon points="1261.2,442.2 1262.3,442.6 1262.4,459.0 1261.3,458.6" fill="#212426" /><polygon points="1257.5,447.6 1266.0,450.9 1266.0,452.6 1257.6,449.2" fill="#212426" /><polygon points="1257.8,473.4 1266.2,477.0 1266.3,493.5 1258.0,489.8" fill="#5c6068" /><polygon points="1261.5,475.0 1262.6,475.5 1262.7,491.9 1261.6,491.4" fill="#212426" /><polygon points="1257.9,480.3 1266.3,483.9 1266.3,485.6 1257.9,481.9" fill="#212426" /><polygon points="1258.2,504.9 1266.4,508.8 1266.6,525.4 1258.4,521.3" fill="#5c6068" /><polygon points="1261.8,506.6 1262.9,507.1 1263.0,523.6 1261.9,523.0" fill="#212426" /><polygon points="1258.2,511.8 1266.5,515.8 1266.5,517.4 1258.3,513.4" fill="#212426" /><polygon points="1270.3,417.3 1272.8,418.1 1273.2,537.0 1270.9,535.8" fill="#b05838" /><polygon points="1272.8,421.7 1288.1,427.1 1287.9,542.6 1273.2,535.2" fill="#212426" /><polygon points="1275.9,447.8 1285.0,451.3 1285.0,468.2 1276.0,464.5" fill="#5c6068" /><polygon points="1279.9,449.4 1281.1,449.8 1281.1,466.6 1279.9,466.1" fill="#212426" /><polygon points="1275.9,454.8 1285.0,458.4 1285.0,460.1 1275.9,456.5" fill="#212426" /><polygon points="1276.0,481.2 1285.0,485.1 1285.0,502.0 1276.1,497.9" fill="#5c6068" /><polygon points="1279.9,482.9 1281.1,483.4 1281.1,500.2 1279.9,499.7" fill="#212426" /><polygon points="1276.0,488.2 1285.0,492.2 1285.0,493.9 1276.0,489.9" fill="#212426" /><polygon points="1276.1,513.4 1285.0,517.6 1284.9,534.5 1276.1,530.1" fill="#5c6068" /><polygon points="1279.9,515.2 1281.1,515.8 1281.1,532.6 1280.0,532.0" fill="#212426" /><polygon points="1276.1,520.4 1284.9,524.7 1284.9,526.4 1276.1,522.1" fill="#212426" /><polygon points="1292.9,425.1 1295.3,426.0 1294.7,547.9 1292.3,546.7" fill="#b05838" /><polygon points="1295.3,429.6 1305.6,433.2 1304.4,551.0 1294.7,546.1" fill="#212426" /><polygon points="1297.2,456.0 1303.3,458.4 1303.1,475.6 1297.1,473.1" fill="#5c6068" /><polygon points="1299.8,457.0 1300.6,457.3 1300.5,474.5 1299.7,474.2" fill="#212426" /><polygon points="1297.2,463.2 1303.2,465.6 1303.2,467.3 1297.1,464.9" fill="#212426" /><polygon points="1297.0,490.2 1303.0,492.8 1302.8,510.0 1296.9,507.3" fill="#5c6068" /><polygon points="1299.6,491.4 1300.4,491.7 1300.2,508.9 1299.5,508.5" fill="#212426" /><polygon points="1296.9,497.4 1302.9,500.0 1302.9,501.8 1296.9,499.1" fill="#212426" /><polygon points="1296.8,523.2 1302.7,526.0 1302.5,543.2 1296.7,540.3" fill="#5c6068" /><polygon points="1299.3,524.4 1300.1,524.8 1300.0,542.0 1299.2,541.6" fill="#212426" /><polygon points="1296.7,530.4 1302.6,533.3 1302.6,535.0 1296.7,532.1" fill="#212426" /><polygon points="1307.2,430.1 1309.7,431.0 1308.3,554.8 1305.9,553.6" fill="#b05838" /><polygon points="1309.7,434.7 1325.0,440.1 1322.9,560.4 1308.3,553.0" fill="#212426" /><polygon points="1312.4,461.9 1321.5,465.4 1321.2,483.0 1312.2,479.3" fill="#5c6068" /><polygon points="1316.4,463.4 1317.6,463.9 1317.3,481.4 1316.1,480.9" fill="#212426" /><polygon points="1312.3,469.2 1321.4,472.8 1321.4,474.5 1312.3,470.9" fill="#212426" /><polygon points="1312.0,496.7 1321.0,500.5 1320.7,518.1 1311.7,514.1" fill="#5c6068" /><polygon points="1315.9,498.3 1317.1,498.9 1316.8,516.4 1315.6,515.8" fill="#212426" /><polygon points="1311.9,504.0 1320.8,507.9 1320.8,509.7 1311.9,505.7" fill="#212426" /><polygon points="1311.5,530.2 1320.4,534.4 1320.1,552.0 1311.3,547.6" fill="#5c6068" /><polygon points="1315.4,532.0 1316.6,532.6 1316.3,550.1 1315.1,549.5" fill="#212426" /><polygon points="1311.5,537.5 1320.3,541.8 1320.3,543.6 1311.4,539.3" fill="#212426" /><polygon points="1342.1,442.2 1344.6,443.1 1341.4,571.7 1339.0,570.5" fill="#b05838" /><polygon points="1344.5,447.0 1361.9,453.1 1358.0,578.2 1341.4,569.8" fill="#212426" /><polygon points="1347.3,475.3 1357.6,479.3 1357.1,497.5 1346.8,493.4" fill="#5c6068" /><polygon points="1351.8,477.0 1353.1,477.5 1352.6,495.7 1351.3,495.2" fill="#212426" /><polygon points="1347.1,482.9 1357.4,486.9 1357.3,488.8 1347.0,484.7" fill="#212426" /><polygon points="1346.3,511.4 1356.5,515.8 1356.0,534.1 1345.9,529.5" fill="#5c6068" /><polygon points="1350.7,513.3 1352.1,513.9 1351.6,532.1 1350.2,531.5" fill="#212426" /><polygon points="1346.1,519.0 1356.3,523.5 1356.2,525.3 1346.1,520.8" fill="#212426" /><polygon points="1345.4,546.3 1355.5,551.0 1354.9,569.3 1344.9,564.4" fill="#5c6068" /><polygon points="1349.8,548.3 1351.1,549.0 1350.6,567.2 1349.3,566.5" fill="#212426" /><polygon points="1345.2,553.9 1355.2,558.7 1355.2,560.5 1345.2,555.7" fill="#212426" /><polygon points="1368.8,451.5 1371.3,452.4 1366.7,584.6 1364.4,583.4" fill="#b05838" /><polygon points="1371.2,456.3 1378.3,458.9 1373.6,586.1 1366.8,582.6" fill="#212426" /><polygon points="1372.3,486.3 1375.1,487.3 1374.5,503.3 1371.7,502.2" fill="#5c6068" /><polygon points="1371.0,523.4 1373.8,524.6 1373.2,540.5 1370.4,539.3" fill="#5c6068" /><polygon points="1369.7,559.1 1372.4,560.5 1371.9,576.4 1369.1,575.0" fill="#5c6068" /><line x1="1072.0" y1="384.4" x2="1399.0" y2="521.3" stroke="#a6a7a1" stroke-width="5" /><line x1="1076.0" y1="411.6" x2="1399.0" y2="563.0" stroke="#a6a7a1" stroke-width="5" /><line x1="1068.0" y1="347.0" x2="1399.0" y2="462.0" stroke="#5a3a30" stroke-width="1.2" /><clipPath id="sec"><polygon points="1399.0,462.0 1437.0,440.0 1441.0,443.0 1441.0,392.0 1630.0,311.0 1631.0,333.0 1643.0,335.0 1634.0,421.0 1546.0,467.0 1546.0,480.0 1519.0,500.0 1519.0,506.0 1393.0,598.0"/></clipPath><polygon points="1399.0,462.0 1437.0,440.0 1441.0,443.0 1441.0,392.0 1630.0,311.0 1631.0,333.0 1643.0,335.0 1634.0,421.0 1546.0,467.0 1546.0,480.0 1519.0,500.0 1519.0,506.0 1393.0,598.0" fill="#b95c40" /><g clip-path="url(#sec)"><polygon points="1503.3,370.4 1512.5,366.5 1512.5,509.3 1503.3,515.6" fill="#2b2e33" /><polygon points="1504.9,411.5 1510.9,408.5 1510.9,429.2 1504.9,432.4" fill="#62646c" /><polygon points="1507.4,410.3 1508.4,409.8 1508.4,430.5 1507.4,431.1" fill="#2b2e33" /><polygon points="1504.9,445.9 1510.9,442.5 1510.9,460.2 1504.9,463.8" fill="#62646c" /><polygon points="1507.4,444.5 1508.4,443.9 1508.4,461.7 1507.4,462.3" fill="#2b2e33" /><polygon points="1504.9,474.2 1510.9,470.5 1510.9,488.3 1504.9,492.1" fill="#62646c" /><polygon points="1507.4,472.7 1508.4,472.1 1508.4,489.9 1507.4,490.5" fill="#2b2e33" /><polygon points="1516.5,364.8 1525.7,360.8 1525.7,500.4 1516.5,506.6" fill="#2b2e33" /><polygon points="1518.0,404.9 1524.1,401.9 1524.1,422.1 1518.0,425.4" fill="#62646c" /><polygon points="1520.5,403.7 1521.6,403.2 1521.6,423.5 1520.5,424.0" fill="#2b2e33" /><polygon points="1518.0,438.5 1524.1,435.1 1524.1,452.4 1518.0,456.0" fill="#62646c" /><polygon points="1520.5,437.1 1521.6,436.5 1521.6,453.9 1520.5,454.5" fill="#2b2e33" /><polygon points="1518.0,466.2 1524.1,462.5 1524.1,479.8 1518.0,483.7" fill="#62646c" /><polygon points="1520.5,464.7 1521.6,464.0 1521.6,481.4 1520.5,482.1" fill="#2b2e33" /><polygon points="1529.6,359.2 1538.8,355.2 1538.8,491.4 1529.6,497.7" fill="#2b2e33" /><polygon points="1531.2,398.3 1537.2,395.3 1537.2,415.0 1531.2,418.3" fill="#62646c" /><polygon points="1533.7,397.1 1534.7,396.6 1534.7,416.4 1533.7,416.9" fill="#2b2e33" /><polygon points="1531.2,431.1 1537.2,427.7 1537.2,444.6 1531.2,448.2" fill="#62646c" /><polygon points="1533.7,429.7 1534.7,429.1 1534.7,446.1 1533.7,446.7" fill="#2b2e33" /><polygon points="1531.2,458.2 1537.2,454.5 1537.2,471.4 1531.2,475.2" fill="#62646c" /><polygon points="1533.7,456.6 1534.7,456.0 1534.7,473.0 1533.7,473.6" fill="#2b2e33" /><polygon points="1542.7,353.5 1551.9,349.6 1551.9,482.4 1542.7,488.7" fill="#2b2e33" /><polygon points="1544.3,391.7 1550.4,388.7 1550.4,407.9 1544.3,411.2" fill="#62646c" /><polygon points="1546.8,390.5 1547.9,390.0 1547.9,409.3 1546.8,409.9" fill="#2b2e33" /><polygon points="1544.3,423.7 1550.4,420.3 1550.4,436.8 1544.3,440.4" fill="#62646c" /><polygon points="1546.8,422.3 1547.9,421.7 1547.9,438.3 1546.8,438.9" fill="#2b2e33" /><polygon points="1544.3,450.1 1550.4,446.4 1550.4,462.9 1544.3,466.8" fill="#62646c" /><polygon points="1546.8,448.6 1547.9,447.9 1547.9,464.5 1546.8,465.2" fill="#2b2e33" /><polygon points="1555.9,347.9 1565.1,343.9 1565.1,473.5 1555.9,479.7" fill="#2b2e33" /><polygon points="1557.5,385.1 1563.5,382.1 1563.5,400.9 1557.5,404.1" fill="#62646c" /><polygon points="1560.0,383.9 1561.0,383.4 1561.0,402.2 1560.0,402.8" fill="#2b2e33" /><polygon points="1557.5,416.3 1563.5,412.9 1563.5,429.0 1557.5,432.6" fill="#62646c" /><polygon points="1560.0,414.9 1561.0,414.3 1561.0,430.5 1560.0,431.1" fill="#2b2e33" /><polygon points="1557.5,442.1 1563.5,438.4 1563.5,454.4 1557.5,458.3" fill="#62646c" /><polygon points="1560.0,440.5 1561.0,439.9 1561.0,456.1 1560.0,456.7" fill="#2b2e33" /><polygon points="1569.0,342.2 1578.2,338.3 1578.2,464.5 1569.0,470.8" fill="#2b2e33" /><polygon points="1570.6,378.5 1576.7,375.5 1576.7,393.8 1570.6,397.0" fill="#62646c" /><polygon points="1573.1,377.3 1574.2,376.8 1574.2,395.1 1573.1,395.7" fill="#2b2e33" /><polygon points="1570.6,408.9 1576.7,405.5 1576.7,421.2 1570.6,424.8" fill="#62646c" /><polygon points="1573.1,407.5 1574.2,406.9 1574.2,422.7 1573.1,423.3" fill="#2b2e33" /><polygon points="1570.6,434.0 1576.7,430.3 1576.7,446.0 1570.6,449.9" fill="#62646c" /><polygon points="1573.1,432.5 1574.2,431.9 1574.2,447.6 1573.1,448.3" fill="#2b2e33" /><polygon points="1582.2,336.6 1591.4,332.6 1591.4,455.5 1582.2,461.8" fill="#2b2e33" /><polygon points="1583.7,371.9 1589.8,368.9 1589.8,386.7 1583.7,390.0" fill="#62646c" /><polygon points="1586.2,370.7 1587.3,370.2 1587.3,388.1 1586.2,388.6" fill="#2b2e33" /><polygon points="1583.7,401.5 1589.8,398.1 1589.8,413.4 1583.7,417.0" fill="#62646c" /><polygon points="1586.2,400.1 1587.3,399.5 1587.3,414.9 1586.2,415.5" fill="#2b2e33" /><polygon points="1583.7,426.0 1589.8,422.3 1589.8,437.5 1583.7,441.4" fill="#62646c" /><polygon points="1586.2,424.5 1587.3,423.8 1587.3,439.2 1586.2,439.8" fill="#2b2e33" /><polygon points="1444.0,404.1 1456.2,398.5 1456.2,433.8 1444.0,440.5" fill="#2b2e33" /><polygon points="1447.1,419.8 1453.2,416.8 1453.2,433.6 1447.1,436.9" fill="#62646c" /><polygon points="1450.2,501.3 1450.2,501.3 1450.2,567.3 1450.2,567.3" fill="#2b2e33" /><polygon points="1452.0,507.5 1448.3,510.2 1448.3,529.1 1452.0,526.3" fill="#62646c" /><polygon points="1464.4,394.8 1476.6,389.2 1476.6,422.6 1464.4,429.3" fill="#2b2e33" /><polygon points="1467.4,409.6 1473.5,406.5 1473.5,422.5 1467.4,425.8" fill="#62646c" /><polygon points="1464.4,442.1 1476.6,434.9 1476.6,468.4 1464.4,476.6" fill="#2b2e33" /><polygon points="1470.5,486.8 1470.5,486.8 1470.5,549.5 1470.5,549.5" fill="#2b2e33" /><polygon points="1472.3,492.6 1468.7,495.3 1468.7,513.3 1472.3,510.5" fill="#62646c" /><polygon points="1484.7,385.4 1496.9,379.8 1496.9,411.4 1484.7,418.1" fill="#2b2e33" /><polygon points="1487.8,399.4 1493.9,396.3 1493.9,411.4 1487.8,414.8" fill="#62646c" /><polygon points="1484.7,430.2 1496.9,423.1 1496.9,454.7 1484.7,462.9" fill="#2b2e33" /><polygon points="1490.8,472.4 1490.8,472.4 1490.8,531.6 1490.8,531.6" fill="#2b2e33" /><polygon points="1492.6,477.8 1489.0,480.5 1489.0,497.5 1492.6,494.6" fill="#62646c" /><polygon points="1597.7,340.7 1604.5,337.5 1604.6,366.3 1597.7,369.7" fill="#2b2e33" /><polygon points="1600.4,345.0 1601.8,344.3 1601.8,363.2 1600.5,363.9" fill="#62646c" /><polygon points="1597.7,377.5 1604.6,374.1 1604.7,392.9 1597.7,396.5" fill="#2b2e33" /><polygon points="1600.5,381.7 1601.9,381.0 1601.9,389.9 1600.5,390.6" fill="#62646c" /><polygon points="1597.7,405.5 1604.7,401.8 1604.7,421.7 1597.7,425.6" fill="#2b2e33" /><polygon points="1600.5,409.6 1601.9,408.8 1601.9,418.8 1600.5,419.6" fill="#62646c" /><polygon points="1609.1,335.5 1615.9,332.3 1616.1,360.7 1609.2,364.1" fill="#2b2e33" /><polygon points="1611.8,339.7 1613.2,339.1 1613.3,357.7 1611.9,358.3" fill="#62646c" /><polygon points="1609.2,371.8 1616.1,368.3 1616.2,386.9 1609.3,390.5" fill="#2b2e33" /><polygon points="1612.0,375.9 1613.4,375.2 1613.4,384.0 1612.0,384.7" fill="#62646c" /><polygon points="1609.3,399.3 1616.2,395.6 1616.3,415.2 1609.4,419.1" fill="#2b2e33" /><polygon points="1612.1,403.3 1613.5,402.6 1613.5,412.4 1612.1,413.2" fill="#62646c" /><polygon points="1620.5,330.3 1627.3,327.1 1627.5,355.1 1620.6,358.4" fill="#2b2e33" /><polygon points="1623.2,334.4 1624.6,333.8 1624.7,352.1 1623.4,352.8" fill="#62646c" /><polygon points="1620.7,366.0 1627.6,362.6 1627.7,380.8 1620.8,384.5" fill="#2b2e33" /><polygon points="1623.5,370.1 1624.9,369.4 1624.9,378.0 1623.5,378.7" fill="#62646c" /><polygon points="1620.9,393.1 1627.8,389.4 1628.0,408.8 1621.0,412.7" fill="#2b2e33" /><polygon points="1623.7,397.1 1625.1,396.3 1625.1,406.0 1623.8,406.8" fill="#62646c" /><polygon points="1431.8,501.0 1440.2,497.6 1440.1,585.2 1431.1,587.4" fill="#2b2e33" /><line x1="1399.0" y1="462.0" x2="1393.0" y2="598.0" stroke="#9a9a9a" stroke-width="1" /></g><line x1="1399.0" y1="519.0" x2="1638.0" y2="368.0" stroke="#d6d7de" stroke-width="4" /><line x1="1399.0" y1="561.0" x2="1635.0" y2="394.0" stroke="#d6d7de" stroke-width="4" /><polygon points="1421.0,532.0 1431.0,538.0 1467.0,520.0 1467.0,529.0 1431.0,548.0 1421.0,542.0" fill="#1c1e20" /><polygon points="1421.0,532.0 1456.0,515.0 1467.0,520.0 1431.0,538.0" fill="#a8aabc" /><polygon points="1443.0,542.0 1447.0,540.0 1447.0,562.0 1443.0,564.0" fill="#1c1e20" /><polygon points="1580.0,434.0 1588.0,438.0 1608.0,427.0 1608.0,434.0 1588.0,445.0 1580.0,441.0" fill="#1c1e20" /><polygon points="1580.0,434.0 1600.0,423.0 1608.0,427.0 1588.0,438.0" fill="#b0b2c4" /><polygon points="1425.0,588.0 1449.0,560.0 1452.0,552.0 1462.0,558.0 1462.0,572.0 1440.0,600.0 1428.0,596.0" fill="#8a8a88" /><line x1="1428.0" y1="590.0" x2="1435.0" y2="592.0" stroke="#b0b0ac" stroke-width="1" /><line x1="1431.7" y1="585.5" x2="1438.7" y2="587.5" stroke="#b0b0ac" stroke-width="1" /><line x1="1435.3" y1="581.0" x2="1442.3" y2="583.0" stroke="#b0b0ac" stroke-width="1" /><line x1="1439.0" y1="576.5" x2="1446.0" y2="578.5" stroke="#b0b0ac" stroke-width="1" /><line x1="1442.7" y1="572.0" x2="1449.7" y2="574.0" stroke="#b0b0ac" stroke-width="1" /><line x1="1446.3" y1="567.5" x2="1453.3" y2="569.5" stroke="#b0b0ac" stroke-width="1" /><polygon points="1578.0,466.0 1598.0,450.0 1602.0,443.0 1614.0,442.0 1614.0,452.0 1590.0,472.0" fill="#9a9a98" /><polygon points="1112.0,460.0 1138.0,447.0 1146.0,452.0 1144.0,460.0 1120.0,470.0" fill="#8a8a88" /><defs><linearGradient id="rg" x1="0" y1="0" x2="0" y2="1"><stop offset="0" stop-color="#8e90a8"/><stop offset="1" stop-color="#7a7c8f"/></linearGradient></defs><polygon points="1068.0,347.0 1351.0,286.0 1473.0,306.0 1517.0,294.0 1630.0,311.0 1441.0,392.0 1441.0,443.0 1437.0,440.0 1399.0,462.0" fill="url(#rg)" gradientUnits="userSpaceOnUse"/><polygon points="1068.0,347.0 1351.0,286.0 1351.0,298.0 1098.0,352.5" fill="#bd5a3c" /><polygon points="1351.0,286.0 1473.0,306.0 1470.0,314.0 1351.0,298.0" fill="#b55639" /><polygon points="1517.0,294.0 1630.0,311.0 1622.0,318.0 1517.0,301.0" fill="#b55639" /><polygon points="1473.0,306.0 1517.0,294.0 1517.0,301.0 1480.0,311.0" fill="#b55639" /><polyline points="1068.0,347.0 1351.0,286.0 1473.0,306.0 1517.0,294.0 1630.0,311.0 1441.0,392.0" fill="none" stroke="#707070" stroke-width="1"/><polygon points="1307.0,357.0 1442.0,392.0 1441.0,443.0 1307.0,413.0" fill="#8b4a2f" /><line x1="1307.0" y1="357.0" x2="1442.0" y2="392.0" stroke="#5a3426" stroke-width="1.2" /><line x1="1307.0" y1="376.0" x2="1441.0" y2="411.0" stroke="#6e3c28" stroke-width="0.8" /><polygon points="1297.0,302.6 1314.5,299.6 1358.4,306.0 1338.6,311.0" fill="#8f91a6" /><polygon points="1297.0,302.6 1338.6,311.0 1338.6,345.0 1297.0,345.0" fill="#b05535" /><polygon points="1338.6,311.0 1358.4,306.0 1358.4,345.0 1338.6,345.0" fill="#b85a3a" /><polygon points="1341.6,313.4 1353.0,313.4 1353.0,346.0 1341.6,346.0" fill="#25282b" /><polygon points="1343.0,315.0 1351.6,315.0 1351.6,329.0 1343.0,329.0" fill="#8a7a80" /><polygon points="1343.0,331.0 1351.6,331.0 1351.6,344.0 1343.0,344.0" fill="#6a6c74" /><polygon points="1247.2,341.7 1324.0,324.9 1324.0,352.0 1306.0,357.0 1250.0,346.0" fill="#2a2d31" /><rect x="1265.0" y="337.3" width="4.2" height="11.7" fill="#e6e1d2"/><rect x="1275.0" y="335.2" width="4.2" height="15.8" fill="#e6e1d2"/><rect x="1291.5" y="331.6" width="4.2" height="22.4" fill="#e6e1d2"/><rect x="1305.0" y="328.6" width="4.2" height="27.4" fill="#e6e1d2"/><rect x="1320.0" y="325.3" width="4.2" height="27.7" fill="#e6e1d2"/><polygon points="1247.0,345.0 1306.0,357.0 1306.0,372.0 1240.0,357.0" fill="#cbc4aa" /><polygon points="1359.0,314.0 1438.0,326.7 1438.0,340.0 1403.5,344.0 1378.0,338.0 1359.0,345.0" fill="#2a2d31" /><polygon points="1359.0,314.0 1372.0,316.0 1372.0,340.0 1359.0,343.0" fill="#e6e1d2" /><rect x="1383.0" y="318.2" width="4.5" height="24.0" fill="#d9d3bf"/><rect x="1397.0" y="320.4" width="4.5" height="24.0" fill="#d9d3bf"/><rect x="1412.0" y="322.8" width="4.5" height="24.0" fill="#d9d3bf"/><rect x="1424.0" y="324.8" width="4.5" height="24.0" fill="#d9d3bf"/><polygon points="1310.0,353.5 1378.0,338.0 1378.0,346.5 1310.0,362.5" fill="#bd5a3c" /><polygon points="1378.0,338.0 1403.5,341.0 1403.5,353.0 1378.0,346.5" fill="#a8513a" /><polygon points="1403.5,341.0 1503.6,310.0 1503.6,324.0 1403.5,353.0" fill="#bd5a3c" /><line x1="1308.0" y1="356.0" x2="1378.0" y2="338.0" stroke="#6a6a6a" stroke-width="1" /><line x1="1403.5" y1="341.0" x2="1503.6" y2="310.0" stroke="#6a6a6a" stroke-width="1" /><line x1="1127.0" y1="360.0" x2="1282.0" y2="329.0" stroke="#4a4b55" stroke-width="1.3" stroke-dasharray="2 5"/><line x1="1127.0" y1="360.0" x2="1282.0" y2="329.0" stroke="#6a6c7c" stroke-width="0.8" /><line x1="1150.0" y1="382.0" x2="1300.0" y2="345.0" stroke="#4a4b55" stroke-width="1.3" stroke-dasharray="2 5"/><line x1="1150.0" y1="382.0" x2="1300.0" y2="345.0" stroke="#6a6c7c" stroke-width="0.8" /><line x1="1200.0" y1="405.0" x2="1306.0" y2="380.0" stroke="#4a4b55" stroke-width="1.3" stroke-dasharray="2 5"/><line x1="1200.0" y1="405.0" x2="1306.0" y2="380.0" stroke="#6a6c7c" stroke-width="0.8" /><line x1="1127.0" y1="352.0" x2="1305.0" y2="419.0" stroke="#4a4b55" stroke-width="1.3" stroke-dasharray="2 5"/><line x1="1127.0" y1="352.0" x2="1305.0" y2="419.0" stroke="#6a6c7c" stroke-width="0.8" /><line x1="1195.0" y1="332.0" x2="1300.0" y2="365.0" stroke="#4a4b55" stroke-width="1.3" stroke-dasharray="2 5"/><line x1="1195.0" y1="332.0" x2="1300.0" y2="365.0" stroke="#6a6c7c" stroke-width="0.8" /><line x1="1250.0" y1="318.0" x2="1320.0" y2="340.0" stroke="#4a4b55" stroke-width="1.3" stroke-dasharray="2 5"/><line x1="1250.0" y1="318.0" x2="1320.0" y2="340.0" stroke="#6a6c7c" stroke-width="0.8" /><line x1="1437.7" y1="342.6" x2="1546.0" y2="317.0" stroke="#4a4b55" stroke-width="1.3" stroke-dasharray="2 5"/><line x1="1437.7" y1="342.6" x2="1546.0" y2="317.0" stroke="#6a6c7c" stroke-width="0.8" /><line x1="1426.0" y1="367.0" x2="1560.0" y2="325.0" stroke="#4a4b55" stroke-width="1.3" stroke-dasharray="2 5"/><line x1="1426.0" y1="367.0" x2="1560.0" y2="325.0" stroke="#6a6c7c" stroke-width="0.8" /><line x1="1437.7" y1="342.6" x2="1516.0" y2="360.0" stroke="#4a4b55" stroke-width="1.3" stroke-dasharray="2 5"/><line x1="1437.7" y1="342.6" x2="1516.0" y2="360.0" stroke="#6a6c7c" stroke-width="0.8" /><line x1="1477.0" y1="329.0" x2="1546.0" y2="342.6" stroke="#4a4b55" stroke-width="1.3" stroke-dasharray="2 5"/><line x1="1477.0" y1="329.0" x2="1546.0" y2="342.6" stroke="#6a6c7c" stroke-width="0.8" /><line x1="1502.6" y1="317.0" x2="1595.0" y2="329.0" stroke="#4a4b55" stroke-width="1.3" stroke-dasharray="2 5"/><line x1="1502.6" y1="317.0" x2="1595.0" y2="329.0" stroke="#6a6c7c" stroke-width="0.8" /><line x1="1546.0" y1="317.0" x2="1610.0" y2="303.0" stroke="#4a4b55" stroke-width="1.3" stroke-dasharray="2 5"/><line x1="1546.0" y1="317.0" x2="1610.0" y2="303.0" stroke="#6a6c7c" stroke-width="0.8" /><line x1="1560.0" y1="325.0" x2="1600.0" y2="332.0" stroke="#4a4b55" stroke-width="1.3" stroke-dasharray="2 5"/><line x1="1560.0" y1="325.0" x2="1600.0" y2="332.0" stroke="#6a6c7c" stroke-width="0.8" /><line x1="1340.0" y1="395.0" x2="1426.0" y2="367.0" stroke="#4a4b55" stroke-width="1.3" stroke-dasharray="2 5"/><line x1="1340.0" y1="395.0" x2="1426.0" y2="367.0" stroke="#6a6c7c" stroke-width="0.8" /><rect x="1121.0" y="336.0" width="13.0" height="18.0" fill="#7c7c78"/><rect x="1121.5" y="337.0" width="1.4" height="16.5" fill="#b4b4b0"/><rect x="1123.9" y="337.0" width="1.4" height="16.5" fill="#b4b4b0"/><rect x="1126.3" y="337.0" width="1.4" height="16.5" fill="#b4b4b0"/><rect x="1128.7" y="337.0" width="1.4" height="16.5" fill="#b4b4b0"/><rect x="1131.1" y="337.0" width="1.4" height="16.5" fill="#b4b4b0"/><rect x="1121.0" y="336.0" width="13.0" height="2" fill="#c8c8c4"/><rect x="1144.0" y="343.0" width="8.0" height="13.0" fill="#7c7c78"/><rect x="1144.5" y="344.0" width="0.8" height="11.5" fill="#b4b4b0"/><rect x="1145.9" y="344.0" width="0.8" height="11.5" fill="#b4b4b0"/><rect x="1147.3" y="344.0" width="0.8" height="11.5" fill="#b4b4b0"/><rect x="1148.7" y="344.0" width="0.8" height="11.5" fill="#b4b4b0"/><rect x="1150.1" y="344.0" width="0.8" height="11.5" fill="#b4b4b0"/><rect x="1144.0" y="343.0" width="8.0" height="2" fill="#c8c8c4"/><rect x="1178.0" y="328.0" width="14.0" height="20.0" fill="#7c7c78"/><rect x="1178.5" y="329.0" width="1.6" height="18.5" fill="#b4b4b0"/><rect x="1181.1" y="329.0" width="1.6" height="18.5" fill="#b4b4b0"/><rect x="1183.7" y="329.0" width="1.6" height="18.5" fill="#b4b4b0"/><rect x="1186.3" y="329.0" width="1.6" height="18.5" fill="#b4b4b0"/><rect x="1188.9" y="329.0" width="1.6" height="18.5" fill="#b4b4b0"/><rect x="1178.0" y="328.0" width="14.0" height="2" fill="#c8c8c4"/><rect x="1173.0" y="350.0" width="12.0" height="20.0" fill="#7c7c78"/><rect x="1173.5" y="351.0" width="1.3" height="18.5" fill="#b4b4b0"/><rect x="1175.7" y="351.0" width="1.3" height="18.5" fill="#b4b4b0"/><rect x="1177.9" y="351.0" width="1.3" height="18.5" fill="#b4b4b0"/><rect x="1180.1" y="351.0" width="1.3" height="18.5" fill="#b4b4b0"/><rect x="1182.3" y="351.0" width="1.3" height="18.5" fill="#b4b4b0"/><rect x="1173.0" y="350.0" width="12.0" height="2" fill="#c8c8c4"/><rect x="1229.0" y="318.0" width="22.0" height="16.0" fill="#7c7c78"/><rect x="1229.5" y="319.0" width="2.5" height="14.5" fill="#b4b4b0"/><rect x="1233.7" y="319.0" width="2.5" height="14.5" fill="#b4b4b0"/><rect x="1237.9" y="319.0" width="2.5" height="14.5" fill="#b4b4b0"/><rect x="1242.1" y="319.0" width="2.5" height="14.5" fill="#b4b4b0"/><rect x="1246.3" y="319.0" width="2.5" height="14.5" fill="#b4b4b0"/><rect x="1229.0" y="318.0" width="22.0" height="2" fill="#c8c8c4"/><rect x="1212.0" y="363.0" width="14.0" height="20.0" fill="#7c7c78"/><rect x="1212.5" y="364.0" width="1.6" height="18.5" fill="#b4b4b0"/><rect x="1215.1" y="364.0" width="1.6" height="18.5" fill="#b4b4b0"/><rect x="1217.7" y="364.0" width="1.6" height="18.5" fill="#b4b4b0"/><rect x="1220.3" y="364.0" width="1.6" height="18.5" fill="#b4b4b0"/><rect x="1222.9" y="364.0" width="1.6" height="18.5" fill="#b4b4b0"/><rect x="1212.0" y="363.0" width="14.0" height="2" fill="#c8c8c4"/><rect x="1234.0" y="352.0" width="22.0" height="28.0" fill="#7c7c78"/><rect x="1234.5" y="353.0" width="2.5" height="26.5" fill="#b4b4b0"/><rect x="1238.7" y="353.0" width="2.5" height="26.5" fill="#b4b4b0"/><rect x="1242.9" y="353.0" width="2.5" height="26.5" fill="#b4b4b0"/><rect x="1247.1" y="353.0" width="2.5" height="26.5" fill="#b4b4b0"/><rect x="1251.3" y="353.0" width="2.5" height="26.5" fill="#b4b4b0"/><rect x="1234.0" y="352.0" width="22.0" height="2" fill="#c8c8c4"/><rect x="1268.0" y="359.0" width="8.0" height="22.0" fill="#7c7c78"/><rect x="1268.5" y="360.0" width="0.8" height="20.5" fill="#b4b4b0"/><rect x="1269.9" y="360.0" width="0.8" height="20.5" fill="#b4b4b0"/><rect x="1271.3" y="360.0" width="0.8" height="20.5" fill="#b4b4b0"/><rect x="1272.7" y="360.0" width="0.8" height="20.5" fill="#b4b4b0"/><rect x="1274.1" y="360.0" width="0.8" height="20.5" fill="#b4b4b0"/><rect x="1268.0" y="359.0" width="8.0" height="2" fill="#c8c8c4"/><rect x="1285.0" y="305.0" width="12.0" height="14.0" fill="#7c7c78"/><rect x="1285.5" y="306.0" width="1.3" height="12.5" fill="#b4b4b0"/><rect x="1287.7" y="306.0" width="1.3" height="12.5" fill="#b4b4b0"/><rect x="1289.9" y="306.0" width="1.3" height="12.5" fill="#b4b4b0"/><rect x="1292.1" y="306.0" width="1.3" height="12.5" fill="#b4b4b0"/><rect x="1294.3" y="306.0" width="1.3" height="12.5" fill="#b4b4b0"/><rect x="1285.0" y="305.0" width="12.0" height="2" fill="#c8c8c4"/><rect x="1328.0" y="285.0" width="16.0" height="15.0" fill="#7c7c78"/><rect x="1328.5" y="286.0" width="1.8" height="13.5" fill="#b4b4b0"/><rect x="1331.5" y="286.0" width="1.8" height="13.5" fill="#b4b4b0"/><rect x="1334.5" y="286.0" width="1.8" height="13.5" fill="#b4b4b0"/><rect x="1337.5" y="286.0" width="1.8" height="13.5" fill="#b4b4b0"/><rect x="1340.5" y="286.0" width="1.8" height="13.5" fill="#b4b4b0"/><rect x="1328.0" y="285.0" width="16.0" height="2" fill="#c8c8c4"/><rect x="1352.0" y="300.0" width="14.0" height="12.0" fill="#7c7c78"/><rect x="1352.5" y="301.0" width="1.6" height="10.5" fill="#b4b4b0"/><rect x="1355.1" y="301.0" width="1.6" height="10.5" fill="#b4b4b0"/><rect x="1357.7" y="301.0" width="1.6" height="10.5" fill="#b4b4b0"/><rect x="1360.3" y="301.0" width="1.6" height="10.5" fill="#b4b4b0"/><rect x="1362.9" y="301.0" width="1.6" height="10.5" fill="#b4b4b0"/><rect x="1352.0" y="300.0" width="14.0" height="2" fill="#c8c8c4"/><rect x="1375.0" y="306.0" width="16.0" height="12.0" fill="#7c7c78"/><rect x="1375.5" y="307.0" width="1.8" height="10.5" fill="#b4b4b0"/><rect x="1378.5" y="307.0" width="1.8" height="10.5" fill="#b4b4b0"/><rect x="1381.5" y="307.0" width="1.8" height="10.5" fill="#b4b4b0"/><rect x="1384.5" y="307.0" width="1.8" height="10.5" fill="#b4b4b0"/><rect x="1387.5" y="307.0" width="1.8" height="10.5" fill="#b4b4b0"/><rect x="1375.0" y="306.0" width="16.0" height="2" fill="#c8c8c4"/><rect x="1398.0" y="296.0" width="14.0" height="10.0" fill="#7c7c78"/><rect x="1398.5" y="297.0" width="1.6" height="8.5" fill="#b4b4b0"/><rect x="1401.1" y="297.0" width="1.6" height="8.5" fill="#b4b4b0"/><rect x="1403.7" y="297.0" width="1.6" height="8.5" fill="#b4b4b0"/><rect x="1406.3" y="297.0" width="1.6" height="8.5" fill="#b4b4b0"/><rect x="1408.9" y="297.0" width="1.6" height="8.5" fill="#b4b4b0"/><rect x="1398.0" y="296.0" width="14.0" height="2" fill="#c8c8c4"/><rect x="1420.0" y="298.0" width="14.0" height="10.0" fill="#7c7c78"/><rect x="1420.5" y="299.0" width="1.6" height="8.5" fill="#b4b4b0"/><rect x="1423.1" y="299.0" width="1.6" height="8.5" fill="#b4b4b0"/><rect x="1425.7" y="299.0" width="1.6" height="8.5" fill="#b4b4b0"/><rect x="1428.3" y="299.0" width="1.6" height="8.5" fill="#b4b4b0"/><rect x="1430.9" y="299.0" width="1.6" height="8.5" fill="#b4b4b0"/><rect x="1420.0" y="298.0" width="14.0" height="2" fill="#c8c8c4"/><rect x="1385.0" y="350.0" width="22.0" height="18.0" fill="#7c7c78"/><rect x="1385.5" y="351.0" width="2.5" height="16.5" fill="#b4b4b0"/><rect x="1389.7" y="351.0" width="2.5" height="16.5" fill="#b4b4b0"/><rect x="1393.9" y="351.0" width="2.5" height="16.5" fill="#b4b4b0"/><rect x="1398.1" y="351.0" width="2.5" height="16.5" fill="#b4b4b0"/><rect x="1402.3" y="351.0" width="2.5" height="16.5" fill="#b4b4b0"/><rect x="1385.0" y="350.0" width="22.0" height="2" fill="#c8c8c4"/><rect x="1410.0" y="347.0" width="14.0" height="16.0" fill="#7c7c78"/><rect x="1410.5" y="348.0" width="1.6" height="14.5" fill="#b4b4b0"/><rect x="1413.1" y="348.0" width="1.6" height="14.5" fill="#b4b4b0"/><rect x="1415.7" y="348.0" width="1.6" height="14.5" fill="#b4b4b0"/><rect x="1418.3" y="348.0" width="1.6" height="14.5" fill="#b4b4b0"/><rect x="1420.9" y="348.0" width="1.6" height="14.5" fill="#b4b4b0"/><rect x="1410.0" y="347.0" width="14.0" height="2" fill="#c8c8c4"/><rect x="1460.0" y="335.0" width="10.0" height="12.0" fill="#7c7c78"/><rect x="1460.5" y="336.0" width="1.1" height="10.5" fill="#b4b4b0"/><rect x="1462.3" y="336.0" width="1.1" height="10.5" fill="#b4b4b0"/><rect x="1464.1" y="336.0" width="1.1" height="10.5" fill="#b4b4b0"/><rect x="1465.9" y="336.0" width="1.1" height="10.5" fill="#b4b4b0"/><rect x="1467.7" y="336.0" width="1.1" height="10.5" fill="#b4b4b0"/><rect x="1460.0" y="335.0" width="10.0" height="2" fill="#c8c8c4"/><rect x="1480.0" y="300.0" width="10.0" height="10.0" fill="#7c7c78"/><rect x="1480.5" y="301.0" width="1.1" height="8.5" fill="#b4b4b0"/><rect x="1482.3" y="301.0" width="1.1" height="8.5" fill="#b4b4b0"/><rect x="1484.1" y="301.0" width="1.1" height="8.5" fill="#b4b4b0"/><rect x="1485.9" y="301.0" width="1.1" height="8.5" fill="#b4b4b0"/><rect x="1487.7" y="301.0" width="1.1" height="8.5" fill="#b4b4b0"/><rect x="1480.0" y="300.0" width="10.0" height="2" fill="#c8c8c4"/><rect x="1540.0" y="305.0" width="12.0" height="10.0" fill="#7c7c78"/><rect x="1540.5" y="306.0" width="1.3" height="8.5" fill="#b4b4b0"/><rect x="1542.7" y="306.0" width="1.3" height="8.5" fill="#b4b4b0"/><rect x="1544.9" y="306.0" width="1.3" height="8.5" fill="#b4b4b0"/><rect x="1547.1" y="306.0" width="1.3" height="8.5" fill="#b4b4b0"/><rect x="1549.3" y="306.0" width="1.3" height="8.5" fill="#b4b4b0"/><rect x="1540.0" y="305.0" width="12.0" height="2" fill="#c8c8c4"/><rect x="1575.0" y="318.0" width="10.0" height="10.0" fill="#7c7c78"/><rect x="1575.5" y="319.0" width="1.1" height="8.5" fill="#b4b4b0"/><rect x="1577.3" y="319.0" width="1.1" height="8.5" fill="#b4b4b0"/><rect x="1579.1" y="319.0" width="1.1" height="8.5" fill="#b4b4b0"/><rect x="1580.9" y="319.0" width="1.1" height="8.5" fill="#b4b4b0"/><rect x="1582.7" y="319.0" width="1.1" height="8.5" fill="#b4b4b0"/><rect x="1575.0" y="318.0" width="10.0" height="2" fill="#c8c8c4"/><line x1="1140.7" y1="316.0" x2="1140.7" y2="352.0" stroke="#8a8a88" stroke-width="1.3" /><line x1="1197.0" y1="305.0" x2="1197.0" y2="340.0" stroke="#8a8a88" stroke-width="1.3" /><line x1="1244.0" y1="296.0" x2="1244.0" y2="330.0" stroke="#8a8a88" stroke-width="1.3" /><line x1="1288.5" y1="287.0" x2="1288.5" y2="315.0" stroke="#8a8a88" stroke-width="1.3" /><line x1="1337.5" y1="279.0" x2="1337.5" y2="300.0" stroke="#8a8a88" stroke-width="1.3" /><line x1="1217.0" y1="332.0" x2="1217.0" y2="370.0" stroke="#8a8a88" stroke-width="1.3" /><line x1="1279.7" y1="357.0" x2="1279.7" y2="390.0" stroke="#8a8a88" stroke-width="1.3" /><line x1="1384.0" y1="276.0" x2="1384.0" y2="300.0" stroke="#8a8a88" stroke-width="1.3" /><line x1="1440.0" y1="270.0" x2="1440.0" y2="300.0" stroke="#8a8a88" stroke-width="1.3" /><line x1="1542.0" y1="283.0" x2="1542.0" y2="305.0" stroke="#8a8a88" stroke-width="1.3" /><line x1="1578.0" y1="285.0" x2="1578.0" y2="310.0" stroke="#8a8a88" stroke-width="1.3" /><line x1="1344.0" y1="393.0" x2="1344.0" y2="378.0" stroke="#2020ff" stroke-width="1.5" /><line x1="1344.0" y1="393.0" x2="1335.0" y2="397.0" stroke="#ff2020" stroke-width="1.5" /><line x1="1344.0" y1="393.0" x2="1354.0" y2="396.0" stroke="#20d020" stroke-width="1.5" /><polygon points="1315.0,400.0 1325.0,398.0 1325.0,410.0 1315.0,412.0" fill="#b07060" /><polygon points="1679.1,86.6 1721.9,93.0 1722.0,157.4 1684.3,135.7" fill="#f7f7f7" /><polygon points="1721.9,93.0 1757.7,86.0 1753.2,134.5 1722.0,157.4" fill="#f2f2f2" /><defs><radialGradient id="tg" cx="0.5" cy="0.5" r="0.5"><stop offset="0" stop-color="#a8a8a8"/><stop offset="0.6" stop-color="#d8d8d8"/><stop offset="1" stop-color="#f4f4f4"/></radialGradient></defs><polygon points="1679.1,86.6 1716.2,81.2 1757.7,86.0 1721.9,93.0" fill="url(#tg)" /><polyline points="1679.1,86.6 1721.9,93 1757.7,86" fill="none" stroke="#3a3a3a" stroke-width="1.3"/><line x1="1721.9" y1="93.0" x2="1722.0" y2="157.4" stroke="#3a3a3a" stroke-width="1.4" /><text x="0" y="0" font-family="Liberation Sans" font-size="11" fill="#9a9a9a" transform="matrix(0.72,0.27,0.04,1.55,1688,116)">Слева</text><text x="0" y="0" font-family="Liberation Sans" font-size="11" fill="#9a9a9a" transform="matrix(0.6,-0.3,0,1.5,1731,129)">Сзади</text><circle cx="991.2" cy="648.7" r="45.7" fill="#232323"/><line x1="991.0" y1="645.0" x2="991.0" y2="626.0" stroke="#0a0aee" stroke-width="2.6" /><polygon points="988.2,627.0 991.0,619.6 993.8,627.0" fill="#0a0aee" /><line x1="988.0" y1="650.0" x2="974.0" y2="655.4" stroke="#ee1010" stroke-width="2.4" /><polygon points="975.4,652.2 969.4,657.0 977.0,658.0" fill="#ee1010" /><line x1="994.5" y1="650.0" x2="1009.0" y2="654.0" stroke="#10dd10" stroke-width="2.4" /><polygon points="1007.4,651.2 1015.0,656.0 1007.2,657.6" fill="#10dd10" /><circle cx="991.2" cy="649" r="4.2" fill="#a8a8a8"/><circle cx="990.2" cy="647.8" r="1.6" fill="#d6d6d6"/><text x="990.4" y="615" font-family="Liberation Sans" font-size="9" fill="#1010ee">Z</text><text x="963" y="659.8" font-family="Liberation Sans" font-size="9" fill="#ee1010">X</text><text x="1021.4" y="657.6" font-family="Liberation Sans" font-size="9" fill="#10cc10">Y</text></svg>
<svg class="abs" style="left:0;top:0" width="1830" height="783" viewBox="0 0 1830 783">
<!-- tree cloud -->
<path d="M1808.2,67 Q1800.8,67.4 1800.8,61.4 Q1800.8,56.6 1805.2,56 Q1806.2,50 1812.5,50 Q1818.8,50 1819.8,56 Q1824.2,56.6 1824.2,61.4 Q1824.2,67.4 1816.8,67" fill="none" stroke="#e4e4e4" stroke-width="1.5" stroke-linecap="round" stroke-linejoin="round"/>
<path d="M1812.5,55.5 V72.6 M1812.5,63.2 L1807.6,59.4 M1812.5,65.2 L1817.2,61.4" fill="none" stroke="#e4e4e4" stroke-width="1.5" stroke-linecap="round" stroke-linejoin="round"/>
<!-- screen focus -->
<path d="M1807.6,109.6 H1799.6 V92.6 H1822.4 V99.6 M1804.4,109.6 V111.8 H1807.6" fill="none" stroke="#e4e4e4" stroke-width="1.5" stroke-linecap="round" stroke-linejoin="round" stroke-width="1.3"/>
<path d="M1809.6,105.6 V101.6 H1813.6 M1820.6,101.6 H1824.6 V105.6 M1824.6,113.6 V117.6 H1820.6 M1813.6,117.6 H1809.6 V113.6" fill="none" stroke="#e4e4e4" stroke-width="1.3"/>
<path d="M1817.1,105.2 L1820.8,107.3 V111.6 L1817.1,113.7 L1813.4,111.6 V107.3 Z" fill="#e0e0e0"/>
<!-- ruler -->
<rect x="1802.4" y="150.2" width="19.2" height="6" fill="none" stroke="#e4e4e4" stroke-width="1.3"/>
<path d="M1805,156 V153.6 M1807.6,156 V153.6 M1810.2,156 V153.6 M1812.8,156 V153.6 M1815.4,156 V153.6 M1818,156 V153.6" stroke="#e4e4e4" stroke-width="1"/>
<path d="M1802.2,158.6 H1821.8" stroke="#e4e4e4" stroke-width="1.3"/>
<path d="M1798,164 L1802.2,168.2 H1798 Z" fill="#e8e8e8"/>
<!-- section planes -->
<path d="M1807.6,191.6 L1817,183.6 V204 L1807.6,211.8 Z" fill="#e0e0e0"/>
<path d="M1798.6,200.4 L1806.6,194.6 H1825.4 L1817.2,200.4 Z" fill="none" stroke="#e4e4e4" stroke-width="1.3"/>
<!-- cube slice -->
<path d="M1800.4,236.8 H1817 V252.4 H1800.4 Z M1807.4,231.4 H1824 V246.8 H1807.4 Z M1800.4,236.8 L1807.4,231.4 M1817,236.8 L1824,231.4 M1817,252.4 L1824,246.8 M1800.4,252.4 L1807.4,246.8" fill="none" stroke="#e4e4e4" stroke-width="1.2"/>
<path d="M1810.4,236.8 L1814.6,233.4 V249.2 L1810.4,252.4 Z" fill="#e0e0e0"/>
<!-- floor plan -->
<path d="M1800.6,294.8 H1826 V277.6 H1824.6 V293.4 H1800.6 Z" fill="#dcdcdc"/>
<path d="M1798.8,278.6 L1801.6,275.8 H1824 V294 H1798.8 Z" fill="none" stroke="#e4e4e4" stroke-width="1.3"/>
<path d="M1798.8,278.6 H1801.6 V275.8" fill="none" stroke="#e4e4e4" stroke-width="1.2"/>
<path d="M1810.8,276 V294 M1799,284.6 H1824" stroke="#e4e4e4" stroke-width="1.2" stroke-dasharray="3 1.6"/>
<path d="M1817,294 V291 H1824" fill="none" stroke="#e4e4e4" stroke-width="1.2"/>
<!-- target -->
<circle cx="1811.9" cy="329.8" r="7" fill="none" stroke="#e6e6e6" stroke-width="1.6"/>
<circle cx="1811.9" cy="329.8" r="3.8" fill="#e0e0e0"/>
<path d="M1811.9,319.2 V322.6 M1811.9,337 V340.4 M1801.3,329.8 H1804.7 M1819.1,329.8 H1822.5" stroke="#e6e6e6" stroke-width="1.8"/>
<!-- flag circle -->
<circle cx="1811.9" cy="373.8" r="12.6" fill="none" stroke="#e4e4e4" stroke-width="1.1"/>
<path d="M1806.2,367.6 V380.8 M1806.2,367.6 Q1809,366.6 1811.6,368.4 Q1815,370.6 1820.2,369.6 V376.6 Q1815,377.6 1811.6,375.4 Q1809,373.6 1806.2,374.8" fill="none" stroke="#e4e4e4" stroke-width="1.2"/>
<!-- grid -->
<path d="M1799,426.2 L1825.9,410.9 M1799,435.8 L1825.9,420.5 M1800.4,421.1 L1817,431.7 M1808,416 L1825.3,425.6" stroke="#e4e4e4" stroke-width="1.1"/>
<text x="1799" y="419" font-family="Liberation Sans" font-size="6.5" fill="#e4e4e4">1</text>
<text x="1808.4" y="413" font-family="Liberation Sans" font-size="6.5" fill="#e4e4e4">2</text>
<!-- dashed boxes -->
<rect x="1800.6" y="460.6" width="23" height="22.6" fill="none" stroke="#e8e8e8" stroke-width="1.5" stroke-dasharray="2.2 2"/>
<path d="M1812,466.2 L1816.8,469 V474.6 L1812,477.4 L1807.2,474.6 V469 Z M1807.2,469 L1812,471.8 L1816.8,469 M1812,471.8 V477.4" fill="none" stroke="#e0e0e0" stroke-width="1.1"/>
<rect x="1800.6" y="504.6" width="23" height="22.8" fill="none" stroke="#e8e8e8" stroke-width="1.5" stroke-dasharray="2.2 2"/>
<path d="M1804.6,516.1 Q1812,507.6 1819.4,516.1 Q1812,524.6 1804.6,516.1 Z" fill="#e4e4e4"/>
<circle cx="1812" cy="516.1" r="2.8" fill="none" stroke="#545454" stroke-width="1.4"/>
<rect x="1800.6" y="548.2" width="23" height="23" fill="none" stroke="#e8e8e8" stroke-width="1.5" stroke-dasharray="2.2 2"/>
<path d="M1804.6,559.5 Q1812,551 1819.4,559.5 Q1812,568 1804.6,559.5 Z" fill="#e4e4e4"/>
<circle cx="1812" cy="559.5" r="2.8" fill="none" stroke="#545454" stroke-width="1.4"/>
<path d="M1805,553.8 L1818.4,566.6" stroke="#545454" stroke-width="2.2"/><path d="M1805,553.2 L1818.4,566" stroke="#e4e4e4" stroke-width="1"/>
<rect x="1800.6" y="592.4" width="23" height="23" fill="none" stroke="#e8e8e8" stroke-width="1.5" stroke-dasharray="2.2 2"/>
<rect x="1810" y="601.8" width="16" height="16" fill="#e2e2e2"/>
<path d="M1813.6,605.4 L1822.4,614.2 M1822.4,605.4 L1813.6,614.2" stroke="#333" stroke-width="1.1"/>
<!-- cube shaded -->
<path d="M1802.4,645.2 L1812,648.6 V664.2 Q1806,661 1803.6,656 Z" fill="#e6e6e6"/>
<path d="M1812,648.6 L1821.8,645.2 L1821,657 L1812,664.2 Z" fill="#9a9a9a" stroke="#e6e6e6" stroke-width="1"/>
<path d="M1802.4,645.2 L1811.4,642 L1821.8,645.2 L1812,648.6 Z" fill="#b8b8b8" stroke="#e6e6e6" stroke-width="1"/>
<!-- orbit -->
<ellipse cx="1812" cy="697" rx="10.8" ry="5.2" fill="none" stroke="#e6e6e6" stroke-width="1.8"/>
<ellipse cx="1812" cy="697" rx="4.8" ry="10.8" fill="none" stroke="#e6e6e6" stroke-width="1.8"/>
<path d="M1812,692.6 V697 L1808.4,700.4 M1812,697 L1815.6,700.4" fill="none" stroke="#e6e6e6" stroke-width="0.9"/>
</svg>
</body></html>
